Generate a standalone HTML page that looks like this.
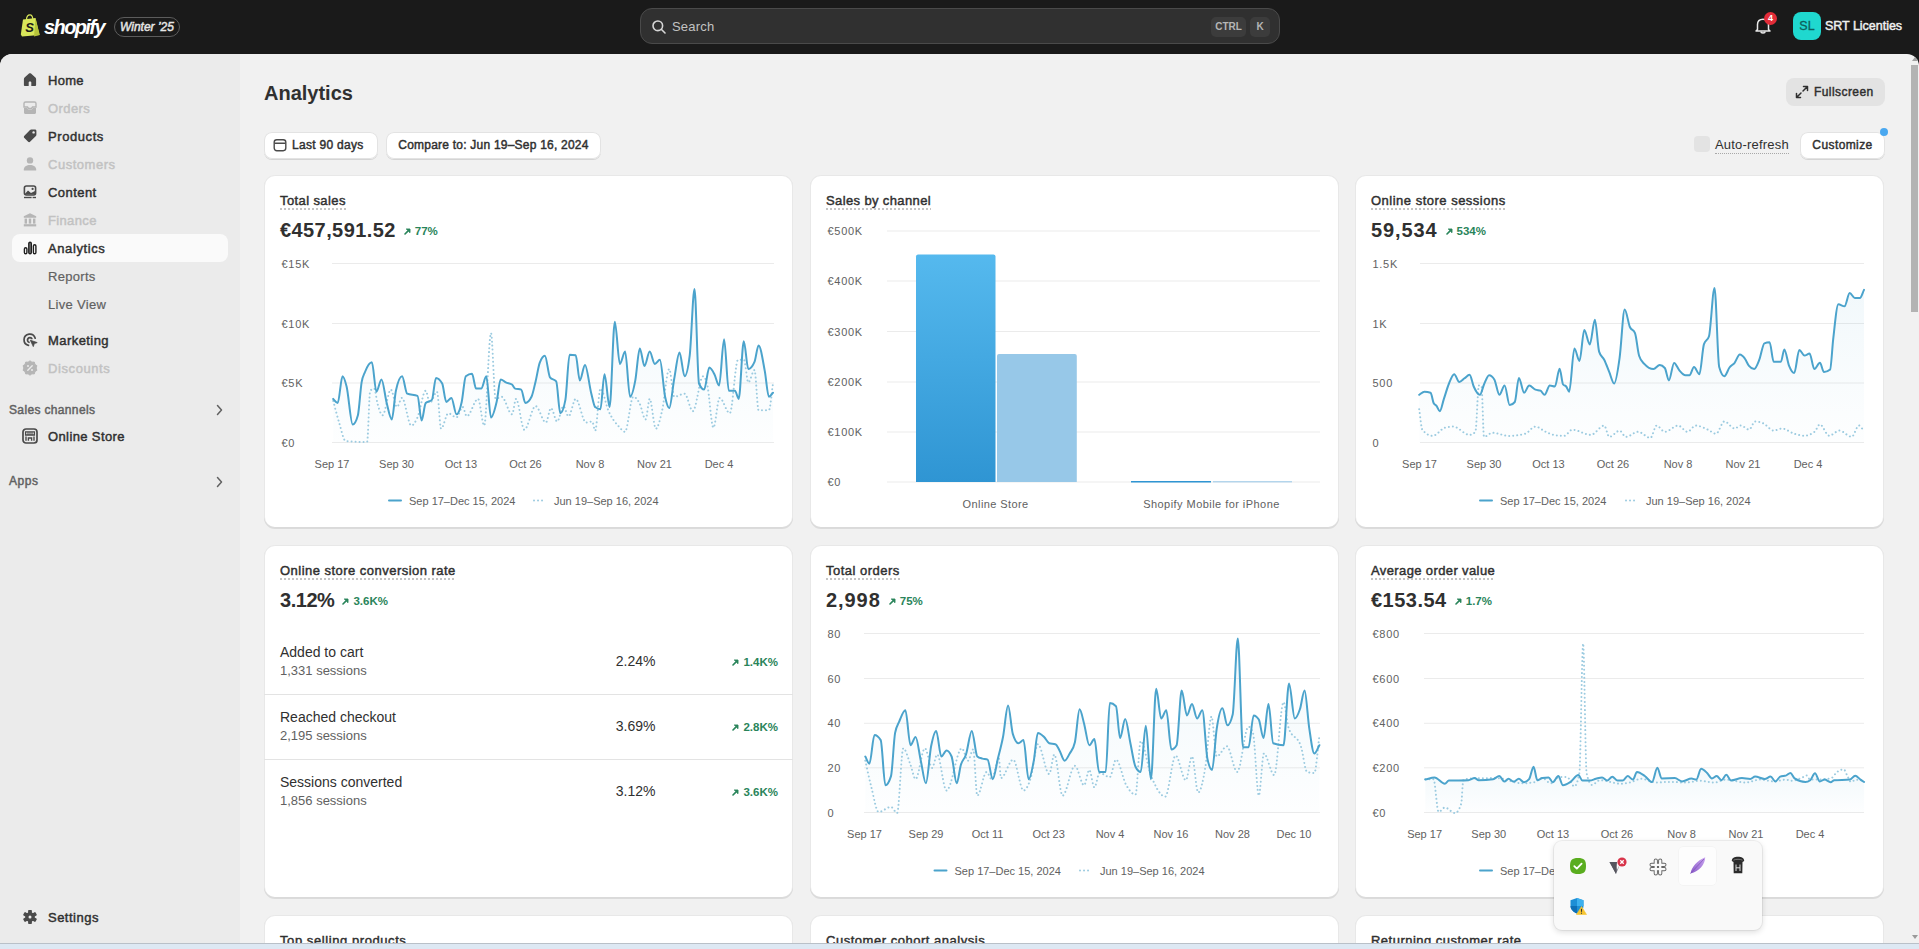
<!DOCTYPE html><html><head><meta charset="utf-8"><style>
*{box-sizing:border-box;margin:0;padding:0}
html,body{width:1919px;height:949px;overflow:hidden;background:#1a1a1a;font-family:"Liberation Sans",sans-serif;color:#303030}
.abs{position:absolute}
.sb{font-weight:400;-webkit-text-stroke:0.45px currentColor}
#top{position:absolute;left:0;top:0;width:1919px;height:54px;background:#1a1a1a}
#frame{position:absolute;left:0;top:54px;width:1919px;height:889px;background:#f1f1f1;border-radius:12px 12px 0 0;overflow:hidden}
#side{position:absolute;left:0;top:0;width:240px;height:889px;background:#ebebeb}
.nav{position:absolute;left:48px;font-size:13px;color:#303030;white-space:nowrap;line-height:16px}
.nav.dis{color:#c2c2c2}
.nav.sub{color:#616161;-webkit-text-stroke:0.2px currentColor;letter-spacing:0.2px}
.card{position:absolute;background:#fff;border-radius:11px;box-shadow:0 1px 0 0 rgba(26,26,26,.1),0 0 0 1px rgba(0,0,0,.09) inset,0 -1px 0 0 rgba(0,0,0,.06) inset;overflow:hidden}
.ctitle{position:absolute;left:16px;top:18px;font-size:13px;color:#303030;line-height:16px;white-space:nowrap}
.ctitle:after{content:"";position:absolute;left:0;right:0;bottom:-1px;height:2px;background:linear-gradient(to right,#c4c4c4 50%,transparent 50%) 0 0/4px 2px repeat-x}
.big{position:absolute;left:16px;top:45px;font-size:20px;font-weight:700;color:#303030;line-height:20px;white-space:nowrap}
.pct{font-size:11.5px;font-weight:700;color:#29845a;margin-left:7px;vertical-align:2px}
.btn{position:absolute;background:#fff;border-radius:8px;box-shadow:0 1px 0 0 #d4d4d4,0 0 0 1px #e3e3e3 inset;font-size:13px;color:#303030;white-space:nowrap;line-height:27px}
svg text{font-family:"Liberation Sans",sans-serif}
</style></head><body>
<div id="top">
<svg class="abs" style="left:20px;top:14px" width="21" height="23" viewBox="0 0 21 23">
<path d="M3 5.5 L15.5 4 L19.5 21 L2 22.5 L0.8 20.5 Z" fill="#d9e75a"/>
<path d="M15.5 4 L19.8 21 L14 22.5 Z" fill="#b6c43a"/>
<path d="M6.5 6 C6.5 2 8.5 0.8 10 0.8 C11.8 0.8 12.6 2.5 12.8 5" fill="none" stroke="#d9e75a" stroke-width="1.2"/>
<text x="9.5" y="18" font-size="13" font-weight="700" font-style="italic" fill="#1a1a1a" text-anchor="middle">S</text>
</svg>
<div class="abs" style="left:44px;top:16px;font-size:20px;font-weight:700;font-style:italic;color:#fff;letter-spacing:-1.6px;line-height:22px">shopify</div>
<div class="abs" style="left:114px;top:17px;width:66px;height:20px;border:1px solid #5c5c5c;border-radius:10px;font-size:12px;font-style:italic;color:#e6e6e6;text-align:center;line-height:18px" class="sb"><span class="sb">Winter ’25</span></div>
<div class="abs" style="left:640px;top:8px;width:640px;height:36px;background:#303030;border:1px solid #4a4a4a;border-radius:12px"></div>
<svg class="abs" style="left:652px;top:20px" width="14" height="14" viewBox="0 0 14 14"><circle cx="5.8" cy="5.8" r="4.8" fill="none" stroke="#d6d6d6" stroke-width="1.6"/><path d="M9.3 9.3 L13 13" stroke="#d6d6d6" stroke-width="1.6" stroke-linecap="round"/></svg>
<div class="abs" style="left:672px;top:19px;font-size:13px;color:#c2c2c2;line-height:16px;letter-spacing:0.2px">Search</div>
<div class="abs" style="left:1211px;top:17px;width:35px;height:20px;background:#3c3c3c;border-radius:5px;font-size:10px;font-weight:700;color:#b5b5b5;text-align:center;line-height:20px">CTRL</div>
<div class="abs" style="left:1250px;top:17px;width:20px;height:20px;background:#3c3c3c;border-radius:5px;font-size:10px;font-weight:700;color:#b5b5b5;text-align:center;line-height:20px">K</div>
<svg class="abs" style="left:1754px;top:16px" width="18" height="19" viewBox="0 0 18 19"><path d="M3.5 13.5 L3.5 8.5 C3.5 5.2 5.8 3.2 9 3.2 C12.2 3.2 14.5 5.2 14.5 8.5 L14.5 13.5 L16 15 L2 15 Z" fill="none" stroke="#e8e8e8" stroke-width="1.5" stroke-linejoin="round"/><path d="M7 15.5 C7 17.5 11 17.5 11 15.5" fill="none" stroke="#e8e8e8" stroke-width="1.5"/></svg>
<div class="abs" style="left:1764px;top:12px;width:13px;height:13px;border-radius:50%;background:#e22c38;font-size:9px;font-weight:700;color:#fff;text-align:center;line-height:13px">4</div>
<div class="abs" style="left:1793px;top:12px;width:28px;height:28px;background:#1fd8cf;border-radius:8px;font-size:12.5px;color:#0d5f5b;text-align:center;line-height:28px;-webkit-text-stroke:0.3px #0d5f5b">SL</div>
<div class="abs sb" style="left:1825px;top:18px;font-size:12.5px;color:#f0f0f0;line-height:16px;letter-spacing:-0.022px">SRT Licenties</div>
</div>
<div id="frame">
<div id="side">
<div class="abs" style="left:12px;top:180px;width:216px;height:28px;background:#fafafa;border-radius:8px"></div>
<div class="nav sb " style="top:18.5px;letter-spacing:0.259px">Home</div>
<div class="nav sb dis" style="top:46.5px;letter-spacing:0.418px">Orders</div>
<div class="nav sb " style="top:74.5px;letter-spacing:0.579px">Products</div>
<div class="nav sb dis" style="top:102.5px;letter-spacing:0.518px">Customers</div>
<div class="nav sb " style="top:130.5px;letter-spacing:0.45px">Content</div>
<div class="nav sb dis" style="top:158.5px;letter-spacing:0.351px">Finance</div>
<div class="nav sb " style="top:186.5px;letter-spacing:0.598px">Analytics</div>
<div class="nav sb sub" style="top:214.5px;letter-spacing:0.3px">Reports</div>
<div class="nav sb sub" style="top:242.5px;letter-spacing:0.3px">Live View</div>
<div class="nav sb " style="top:278.5px;letter-spacing:0.435px">Marketing</div>
<div class="nav sb dis" style="top:306.5px;letter-spacing:0.594px">Discounts</div>
<div class="nav sb " style="top:375.0px;letter-spacing:0.383px">Online Store</div>
<div class="nav sb " style="top:855.5px;letter-spacing:0.487px">Settings</div>
<div class="abs sb" style="left:9px;top:348.5px;font-size:12px;color:#616161;line-height:14px;letter-spacing:0.35px">Sales channels</div>
<div class="abs sb" style="left:9px;top:420px;font-size:12px;color:#616161;line-height:14px;letter-spacing:0.564px">Apps</div>
<svg class="abs" style="left:22px;top:18px" width="16" height="16" viewBox="0 0 16 16"><path d="M8 1.2 C8.4 1.2 8.7 1.3 9 1.6 L13.4 5.6 C13.9 6 14.1 6.5 14.1 7.1 L14.1 12.9 C14.1 13.6 13.6 14.1 12.9 14.1 L9.3 14.1 L9.3 10.6 C9.3 10 8.8 9.6 8.3 9.6 L7.7 9.6 C7.2 9.6 6.7 10 6.7 10.6 L6.7 14.1 L3.1 14.1 C2.4 14.1 1.9 13.6 1.9 12.9 L1.9 7.1 C1.9 6.5 2.1 6 2.6 5.6 L7 1.6 C7.3 1.3 7.6 1.2 8 1.2 Z" fill="#4a4a4a"/></svg>
<svg class="abs" style="left:22px;top:46px" width="16" height="16" viewBox="0 0 16 16"><path d="M3.5 2 L12.5 2 C13.4 2 14 2.6 14 3.5 L14 7 L10.5 7 L9.5 8.5 L6.5 8.5 L5.5 7 L2 7 L2 3.5 C2 2.6 2.6 2 3.5 2 Z" fill="none" stroke="#b5b5b5" stroke-width="1.4"/><path d="M2 8 L5 8 L6.2 9.6 L9.8 9.6 L11 8 L14 8 L14 12.5 C14 13.4 13.4 14 12.5 14 L3.5 14 C2.6 14 2 13.4 2 12.5 Z" fill="#b5b5b5"/></svg>
<svg class="abs" style="left:22px;top:74px" width="16" height="16" viewBox="0 0 16 16"><path d="M9.2 1.6 L13 1.6 C13.8 1.6 14.4 2.2 14.4 3 L14.4 6.8 C14.4 7.3 14.2 7.7 13.9 8 L8.3 13.6 C7.6 14.3 6.6 14.3 5.9 13.6 L2.4 10.1 C1.7 9.4 1.7 8.4 2.4 7.7 L8 2.1 C8.3 1.8 8.7 1.6 9.2 1.6 Z" fill="#4a4a4a"/><circle cx="11.6" cy="4.4" r="1.2" fill="#ebebeb"/></svg>
<svg class="abs" style="left:22px;top:102px" width="16" height="16" viewBox="0 0 16 16"><circle cx="8" cy="4.4" r="3.2" fill="#b5b5b5"/><path d="M1.8 13.5 C1.8 10.6 4.6 8.9 8 8.9 C11.4 8.9 14.2 10.6 14.2 13.5 L14.2 14.6 L1.8 14.6 Z" fill="#b5b5b5"/></svg>
<svg class="abs" style="left:22px;top:130px" width="16" height="16" viewBox="0 0 16 16"><rect x="2.4" y="2" width="11.2" height="9" rx="2" fill="none" stroke="#4a4a4a" stroke-width="1.6"/><path d="M3 9.8 L6 6.5 L9 9 L13 7 L13 10.5 L3 10.5 Z" fill="#4a4a4a"/><circle cx="10.6" cy="4.9" r="1.1" fill="#4a4a4a"/><rect x="2" y="12.8" width="7.6" height="1.4" fill="#4a4a4a"/><rect x="10.6" y="12.8" width="3.4" height="1.4" fill="#4a4a4a"/></svg>
<svg class="abs" style="left:22px;top:158px" width="16" height="16" viewBox="0 0 16 16"><path d="M8 1.2 L14.2 4.2 L14.2 5.8 L1.8 5.8 L1.8 4.2 Z" fill="#b5b5b5"/><rect x="2.6" y="6.6" width="2.4" height="5" fill="#b5b5b5"/><rect x="6.8" y="6.6" width="2.4" height="5" fill="#b5b5b5"/><rect x="11" y="6.6" width="2.4" height="5" fill="#b5b5b5"/><rect x="1.8" y="12.2" width="12.4" height="2.2" fill="#b5b5b5"/></svg>
<svg class="abs" style="left:22px;top:186px" width="16" height="16" viewBox="0 0 16 16"><rect x="2.4" y="7.7" width="2.5" height="6" rx="1.25" fill="#fff" stroke="#1f1f1f" stroke-width="1.4"/><rect x="6.8" y="2.2" width="2.5" height="11.5" rx="1.25" fill="#8a8a8a" stroke="#1f1f1f" stroke-width="1.4"/><rect x="11.4" y="4.7" width="2.5" height="9" rx="1.25" fill="#fff" stroke="#1f1f1f" stroke-width="1.4"/></svg>
<svg class="abs" style="left:22px;top:278px" width="16" height="16" viewBox="0 0 16 16"><path d="M13.2 6.2 A5.7 5.7 0 1 0 6.5 13.4" fill="none" stroke="#4a4a4a" stroke-width="1.7" stroke-linecap="round"/><path d="M9.8 6.6 A2.4 2.4 0 1 0 7 10.3" fill="none" stroke="#4a4a4a" stroke-width="1.7" stroke-linecap="round"/><path d="M8.3 8.2 L15.2 10.6 L12.3 11.6 L11.3 14.6 Z" fill="#4a4a4a" stroke="#4a4a4a" stroke-width="0.8" stroke-linejoin="round"/></svg>
<svg class="abs" style="left:22px;top:306px" width="16" height="16" viewBox="0 0 16 16"><path d="M8 0.8 L9.9 2.2 L12.3 2.1 L12.9 4.4 L14.9 5.7 L14.1 8 L14.9 10.3 L12.9 11.6 L12.3 13.9 L9.9 13.8 L8 15.2 L6.1 13.8 L3.7 13.9 L3.1 11.6 L1.1 10.3 L1.9 8 L1.1 5.7 L3.1 4.4 L3.7 2.1 L6.1 2.2 Z" fill="#b5b5b5" stroke="#b5b5b5" stroke-width="1" stroke-linejoin="round"/><path d="M5.8 10.2 L10.2 5.8" stroke="#ebebeb" stroke-width="1.4" stroke-linecap="round"/><circle cx="6" cy="6" r="1" fill="#ebebeb"/><circle cx="10" cy="10" r="1" fill="#ebebeb"/></svg>
<svg class="abs" style="left:22px;top:374px" width="16" height="16" viewBox="0 0 16 16"><rect x="1" y="1" width="14" height="14" rx="3" fill="none" stroke="#4a4a4a" stroke-width="1.7"/><path d="M3.6 3.8 L12.4 3.8 L12.4 7 L3.6 7 Z" fill="none" stroke="#4a4a4a" stroke-width="1.3"/><path d="M6 4 L6 7 M8 4 L8 7 M10 4 L10 7" stroke="#4a4a4a" stroke-width="1"/><path d="M4 12.8 L4 8.6 M12 12.8 L12 8.6 M6.4 12.8 L6.4 10 L9.6 10 L9.6 12.8" fill="none" stroke="#4a4a4a" stroke-width="1.4"/></svg>
<svg class="abs" style="left:22px;top:855px" width="16" height="16" viewBox="0 0 16 16"><g fill="#4a4a4a"><circle cx="8" cy="8" r="4.8"/><rect x="6.1" y="0.9" width="3.8" height="3.6" rx="0.8" transform="rotate(0 8 8)"/><rect x="6.1" y="0.9" width="3.8" height="3.6" rx="0.8" transform="rotate(60 8 8)"/><rect x="6.1" y="0.9" width="3.8" height="3.6" rx="0.8" transform="rotate(120 8 8)"/><rect x="6.1" y="0.9" width="3.8" height="3.6" rx="0.8" transform="rotate(180 8 8)"/><rect x="6.1" y="0.9" width="3.8" height="3.6" rx="0.8" transform="rotate(240 8 8)"/><rect x="6.1" y="0.9" width="3.8" height="3.6" rx="0.8" transform="rotate(300 8 8)"/></g><circle cx="8" cy="8" r="1.5" fill="#ebebeb"/></svg>
<svg class="abs" style="left:212px;top:348px" width="16" height="16" viewBox="0 0 16 16"><path d="M5.5 3.5 L9.5 8 L5.5 12.5" fill="none" stroke="#616161" stroke-width="1.5" stroke-linecap="round" stroke-linejoin="round"/></svg>
<svg class="abs" style="left:212px;top:420px" width="16" height="16" viewBox="0 0 16 16"><path d="M5.5 3.5 L9.5 8 L5.5 12.5" fill="none" stroke="#616161" stroke-width="1.5" stroke-linecap="round" stroke-linejoin="round"/></svg>
</div>
<div class="abs" style="left:264px;top:27px;font-size:20px;font-weight:700;color:#303030;line-height:24px">Analytics</div>
<div class="abs" style="left:1786px;top:24px;width:99px;height:28px;background:#e3e3e3;border-radius:8px"></div>
<svg class="abs" style="left:1795px;top:31px" width="14" height="14" viewBox="0 0 14 14"><path d="M8.5 1.5 L12.5 1.5 L12.5 5.5 M12.5 1.5 L8 6 M5.5 12.5 L1.5 12.5 L1.5 8.5 M1.5 12.5 L6 8" fill="none" stroke="#303030" stroke-width="1.5" stroke-linecap="round" stroke-linejoin="round"/></svg>
<div class="abs sb" style="left:1814px;top:31px;font-size:12px;color:#303030;line-height:14px;letter-spacing:0.424px">Fullscreen</div>
<div class="btn sb" style="left:264px;top:78px;width:114px;height:27px;padding-left:28px;font-size:12px;letter-spacing:0.3px">Last 90 days</div>
<svg class="abs" style="left:273px;top:84px" width="14" height="14" viewBox="0 0 14 14"><rect x="1.2" y="1.7" width="11.6" height="11" rx="2.6" fill="none" stroke="#4a4a4a" stroke-width="1.4"/><path d="M1.5 5.3 L12.5 5.3" stroke="#4a4a4a" stroke-width="1.4"/></svg>
<div class="btn sb" style="left:386px;top:78px;width:215px;height:27px;text-align:center;font-size:12px;letter-spacing:0.222px">Compare to: Jun 19–Sep 16, 2024</div>
<div class="abs" style="left:1694px;top:82px;width:16px;height:16px;background:#e3e3e3;border-radius:4px"></div>
<div class="abs" style="left:1715px;top:84px;font-size:13px;color:#303030;line-height:14px;border-bottom:1.5px dotted #a8a8a8;padding-bottom:1px;letter-spacing:0.2px">Auto-refresh</div>
<div class="btn sb" style="left:1800px;top:78px;width:85px;height:27px;text-align:center;font-size:12px;letter-spacing:0.398px">Customize</div>
<div class="abs" style="left:1880px;top:74px;width:8px;height:8px;border-radius:50%;background:#4aa8f0"></div>
<div class="card" style="left:264px;top:121px;width:529px;height:353px">
<div class="ctitle sb" style="letter-spacing:0.4px">Total sales</div>
<div class="big"><span style="letter-spacing:0.41px">€457,591.52</span><span class="pct"><svg width="7" height="7" viewBox="0 0 7 7" style="margin-right:4px;margin-left:1px;vertical-align:0px"><path d="M1 6 L3.6 3.4" stroke="#29845a" stroke-width="1.6" stroke-linecap="round"/><path d="M2.3 1 L6 1 L6 4.7 Z" fill="#29845a" stroke="#29845a" stroke-width="0.9" stroke-linejoin="round"/></svg>77%</span></div>
<svg class="abs" style="left:0;top:0" width="529" height="353" viewBox="264 175 529 353">
<defs><linearGradient id="g264175" x1="0" y1="0" x2="0" y2="1"><stop offset="0" stop-color="#4ba3cc" stop-opacity="0.075"/><stop offset="1" stop-color="#4ba3cc" stop-opacity="0.01"/></linearGradient></defs>
<line x1="332" y1="263.5" x2="774" y2="263.5" stroke="#ebebeb" stroke-width="1"/>
<text x="281.5" y="267.5" font-size="11" fill="#616161" letter-spacing="0.7">€15K</text>
<line x1="332" y1="323.5" x2="774" y2="323.5" stroke="#ebebeb" stroke-width="1"/>
<text x="281.5" y="327.5" font-size="11" fill="#616161" letter-spacing="0.7">€10K</text>
<line x1="332" y1="383" x2="774" y2="383" stroke="#ebebeb" stroke-width="1"/>
<text x="281.5" y="387" font-size="11" fill="#616161" letter-spacing="0.7">€5K</text>
<line x1="332" y1="442.5" x2="774" y2="442.5" stroke="#ebebeb" stroke-width="1"/>
<text x="281.5" y="446.5" font-size="11" fill="#616161" letter-spacing="0.7">€0</text>
<text x="332" y="468" font-size="11" fill="#616161" text-anchor="middle">Sep 17</text>
<text x="396.5" y="468" font-size="11" fill="#616161" text-anchor="middle">Sep 30</text>
<text x="461" y="468" font-size="11" fill="#616161" text-anchor="middle">Oct 13</text>
<text x="525.5" y="468" font-size="11" fill="#616161" text-anchor="middle">Oct 26</text>
<text x="590" y="468" font-size="11" fill="#616161" text-anchor="middle">Nov 8</text>
<text x="654.5" y="468" font-size="11" fill="#616161" text-anchor="middle">Nov 21</text>
<text x="719" y="468" font-size="11" fill="#616161" text-anchor="middle">Dec 4</text>
<path d="M333.2,398.9 C334.7,400.3 336.2,403.0 337.7,403.0 C339.3,403.0 340.9,376.3 342.5,376.3 C343.9,376.3 345.2,381.0 346.6,386.5 C348.6,394.6 350.7,424.6 352.7,424.6 C354.4,424.6 356.2,421.5 357.9,415.3 C359.1,410.9 360.4,389.6 361.6,382.4 C362.7,375.8 363.9,374.8 365.0,372.0 C367.3,366.2 369.6,362.3 371.9,362.3 C373.4,362.3 374.9,391.7 376.4,391.7 C378.1,391.7 379.8,379.4 381.5,379.4 C383.2,379.4 385.0,396.3 386.7,403.0 C388.4,409.6 390.1,419.4 391.8,419.4 C393.2,419.4 394.5,397.0 395.9,390.7 C398.0,381.1 400.0,376.3 402.1,376.3 C403.8,376.3 405.5,393.0 407.2,393.7 C410.6,395.1 414.1,394.4 417.5,395.8 C418.9,396.4 420.2,420.5 421.6,420.5 C423.0,420.5 424.3,404.4 425.7,403.0 C427.8,400.9 429.8,402.0 431.9,399.9 C433.3,398.5 434.6,377.9 436.0,377.9 C438.1,377.9 440.1,379.8 442.2,383.5 C443.6,386.0 444.9,402.0 446.3,402.0 C448.0,402.0 449.7,397.9 451.4,397.9 C453.1,397.9 454.8,414.3 456.5,414.3 C458.2,414.3 460.0,409.9 461.7,402.0 C463.1,395.8 464.4,377.4 465.8,376.3 C467.9,374.6 469.9,373.8 472.0,373.8 C473.4,373.8 474.7,388.6 476.1,388.6 C477.8,388.6 479.5,388.6 481.2,388.6 C482.9,388.6 484.6,376.3 486.3,376.3 C487.9,376.3 489.4,417.4 491.0,417.4 C492.9,417.4 494.7,410.1 496.6,402.0 C498.0,396.1 499.3,379.4 500.7,379.4 C502.4,379.4 504.1,381.6 505.8,382.4 C507.9,383.4 509.9,383.1 512.0,384.5 C513.0,385.2 514.1,388.3 515.1,388.6 C517.1,389.3 519.2,388.9 521.2,389.6 C522.6,390.1 524.0,403.0 525.4,403.0 C527.4,403.0 529.5,400.9 531.5,396.8 C532.9,394.0 534.2,387.0 535.6,381.4 C537.0,375.8 538.3,366.7 539.7,362.9 C541.4,358.1 543.2,355.7 544.9,355.7 C546.6,355.7 548.3,375.1 550.0,377.3 C552.1,380.0 554.1,378.7 556.2,381.4 C557.6,383.2 558.9,413.3 560.3,413.3 C562.0,413.3 563.7,408.8 565.4,399.9 C566.8,392.5 568.2,354.7 569.6,354.7 C571.6,354.7 573.7,354.9 575.7,355.3 C577.1,355.6 578.4,380.4 579.8,380.4 C581.5,380.4 583.3,365.0 585.0,365.0 C587.0,365.0 589.1,384.7 591.1,392.7 C592.5,398.1 593.8,406.0 595.2,407.1 C596.9,408.5 598.7,409.2 600.4,409.2 C601.8,409.2 603.1,374.2 604.5,374.2 C606.2,374.2 607.9,407.1 609.6,407.1 C611.3,407.1 613.1,321.8 614.8,321.8 C616.5,321.8 618.2,363.9 619.9,363.9 C621.6,363.9 623.4,351.6 625.1,351.6 C626.8,351.6 628.4,396.8 630.1,396.8 C631.8,396.8 633.6,389.5 635.3,380.4 C636.8,372.5 638.3,348.5 639.8,348.5 C641.4,348.5 642.9,366.0 644.5,366.0 C646.2,366.0 648.0,351.6 649.7,351.6 C651.4,351.6 653.1,364.0 654.8,364.0 C656.5,364.0 658.2,359.8 659.9,359.8 C661.6,359.8 663.4,388.7 665.1,396.8 C666.5,403.2 667.8,408.1 669.2,408.1 C670.9,408.1 672.6,387.5 674.3,378.3 C676.0,368.9 677.8,352.6 679.5,352.6 C681.2,352.6 682.9,376.3 684.6,376.3 C686.3,376.3 688.0,369.4 689.7,355.7 C691.3,342.8 692.9,288.9 694.5,288.9 C696.0,288.9 697.5,379.9 699.0,383.5 C700.7,387.6 702.4,389.6 704.1,389.6 C705.8,389.6 707.6,367.6 709.3,367.6 C711.0,367.6 712.7,371.0 714.4,374.2 C716.0,377.1 717.5,385.5 719.1,385.5 C720.8,385.5 722.4,339.3 724.1,339.3 C725.7,339.3 727.2,390.7 728.8,390.7 C730.9,390.7 732.9,390.7 735.0,390.7 C736.2,390.7 737.5,398.9 738.7,398.9 C740.4,398.9 742.1,341.3 743.8,341.3 C745.3,341.3 746.8,369.1 748.3,369.1 C750.4,369.1 752.4,366.7 754.5,361.9 C755.9,358.7 757.2,345.4 758.6,345.4 C760.7,345.4 762.7,359.9 764.8,371.1 C766.2,378.5 767.5,396.8 768.9,396.8 C770.3,396.8 771.6,394.1 773.0,392.7 L773.0,442.5 L333.2,442.5 Z" fill="url(#g264175)"/>
<path d="M333.2,401.0 C335.3,408.5 337.3,416.8 339.4,423.5 C341.5,430.2 343.5,440.8 345.6,441.0 C352.8,441.7 359.9,442.0 367.1,442.0 C368.1,442.0 369.2,391.8 370.2,390.7 C371.6,389.3 372.9,388.6 374.3,388.6 C375.3,388.6 376.4,399.1 377.4,403.0 C379.1,409.6 380.9,415.3 382.6,415.3 C385.3,415.3 388.1,389.6 390.8,389.6 C392.9,389.6 394.9,407.0 397.0,407.0 C398.7,407.0 400.3,397.9 402.0,397.9 C405.1,397.9 408.2,425.6 411.3,425.6 C413.4,425.6 415.4,421.9 417.5,417.4 C420.2,411.5 423.0,390.7 425.7,390.7 C427.1,390.7 428.4,403.0 429.8,403.0 C432.2,403.0 434.6,391.7 437.0,391.7 C438.4,391.7 439.7,428.7 441.1,428.7 C443.5,428.7 445.9,413.3 448.3,413.3 C451.0,413.3 453.8,417.4 456.5,417.4 C458.6,417.4 460.6,407.0 462.7,407.0 C464.1,407.0 465.4,416.3 466.8,416.3 C470.6,416.3 474.3,398.9 478.1,398.9 C480.1,398.9 482.2,425.6 484.2,425.6 C486.5,425.6 488.7,333.1 491.0,333.1 C492.5,333.1 494.1,398.9 495.6,398.9 C497.6,398.9 499.7,396.8 501.7,396.8 C505.1,396.8 508.6,414.3 512.0,414.3 C513.4,414.3 514.7,398.9 516.1,398.9 C518.8,398.9 521.6,429.7 524.3,429.7 C528.1,429.7 531.8,406.1 535.6,406.1 C539.0,406.1 542.5,422.5 545.9,422.5 C547.6,422.5 549.3,408.1 551.0,408.1 C553.1,408.1 555.1,421.5 557.2,421.5 C559.3,421.5 561.3,406.1 563.4,406.1 C565.1,406.1 566.8,416.4 568.5,416.4 C570.9,416.4 573.3,398.9 575.7,398.9 C579.1,398.9 582.6,422.5 586.0,422.5 C588.1,422.5 590.1,421.5 592.2,421.5 C593.2,421.5 594.2,430.7 595.2,430.7 C596.9,430.7 598.7,388.6 600.4,388.6 C603.1,388.6 605.9,405.2 608.6,411.2 C612.0,418.7 615.5,422.9 618.9,426.6 C620.9,428.8 623.0,431.8 625.0,431.8 C627.7,431.8 630.5,396.8 633.2,396.8 C635.3,396.8 637.3,399.2 639.4,403.0 C641.5,406.8 643.5,419.4 645.6,419.4 C647.0,419.4 648.3,398.9 649.7,398.9 C651.7,398.9 653.8,428.7 655.8,428.7 C657.9,428.7 659.9,419.9 662.0,411.2 C664.4,401.1 666.8,369.1 669.2,369.1 C670.9,369.1 672.6,396.8 674.3,396.8 C677.7,396.8 681.2,393.7 684.6,393.7 C687.3,393.7 690.1,411.2 692.8,411.2 C696.2,411.2 699.7,376.3 703.1,376.3 C704.5,376.3 705.8,379.1 707.2,384.5 C709.3,392.7 711.3,427.7 713.4,427.7 C715.5,427.7 717.5,397.9 719.6,397.9 C723.0,397.9 726.4,413.3 729.8,413.3 C732.5,413.3 735.3,359.8 738.0,359.8 C740.0,359.8 742.0,359.8 744.0,359.8 C745.4,359.8 746.9,382.4 748.3,382.4 C750.4,382.4 752.4,370.1 754.5,370.1 C755.9,370.1 757.2,410.2 758.6,410.2 C762.0,410.2 765.5,410.2 768.9,410.2 C770.3,410.2 771.6,392.4 773.0,383.5" fill="none" stroke="#9ccbe0" stroke-width="2" stroke-dasharray="0.01 4" stroke-linecap="round"/>
<path d="M333.2,398.9 C334.7,400.3 336.2,403.0 337.7,403.0 C339.3,403.0 340.9,376.3 342.5,376.3 C343.9,376.3 345.2,381.0 346.6,386.5 C348.6,394.6 350.7,424.6 352.7,424.6 C354.4,424.6 356.2,421.5 357.9,415.3 C359.1,410.9 360.4,389.6 361.6,382.4 C362.7,375.8 363.9,374.8 365.0,372.0 C367.3,366.2 369.6,362.3 371.9,362.3 C373.4,362.3 374.9,391.7 376.4,391.7 C378.1,391.7 379.8,379.4 381.5,379.4 C383.2,379.4 385.0,396.3 386.7,403.0 C388.4,409.6 390.1,419.4 391.8,419.4 C393.2,419.4 394.5,397.0 395.9,390.7 C398.0,381.1 400.0,376.3 402.1,376.3 C403.8,376.3 405.5,393.0 407.2,393.7 C410.6,395.1 414.1,394.4 417.5,395.8 C418.9,396.4 420.2,420.5 421.6,420.5 C423.0,420.5 424.3,404.4 425.7,403.0 C427.8,400.9 429.8,402.0 431.9,399.9 C433.3,398.5 434.6,377.9 436.0,377.9 C438.1,377.9 440.1,379.8 442.2,383.5 C443.6,386.0 444.9,402.0 446.3,402.0 C448.0,402.0 449.7,397.9 451.4,397.9 C453.1,397.9 454.8,414.3 456.5,414.3 C458.2,414.3 460.0,409.9 461.7,402.0 C463.1,395.8 464.4,377.4 465.8,376.3 C467.9,374.6 469.9,373.8 472.0,373.8 C473.4,373.8 474.7,388.6 476.1,388.6 C477.8,388.6 479.5,388.6 481.2,388.6 C482.9,388.6 484.6,376.3 486.3,376.3 C487.9,376.3 489.4,417.4 491.0,417.4 C492.9,417.4 494.7,410.1 496.6,402.0 C498.0,396.1 499.3,379.4 500.7,379.4 C502.4,379.4 504.1,381.6 505.8,382.4 C507.9,383.4 509.9,383.1 512.0,384.5 C513.0,385.2 514.1,388.3 515.1,388.6 C517.1,389.3 519.2,388.9 521.2,389.6 C522.6,390.1 524.0,403.0 525.4,403.0 C527.4,403.0 529.5,400.9 531.5,396.8 C532.9,394.0 534.2,387.0 535.6,381.4 C537.0,375.8 538.3,366.7 539.7,362.9 C541.4,358.1 543.2,355.7 544.9,355.7 C546.6,355.7 548.3,375.1 550.0,377.3 C552.1,380.0 554.1,378.7 556.2,381.4 C557.6,383.2 558.9,413.3 560.3,413.3 C562.0,413.3 563.7,408.8 565.4,399.9 C566.8,392.5 568.2,354.7 569.6,354.7 C571.6,354.7 573.7,354.9 575.7,355.3 C577.1,355.6 578.4,380.4 579.8,380.4 C581.5,380.4 583.3,365.0 585.0,365.0 C587.0,365.0 589.1,384.7 591.1,392.7 C592.5,398.1 593.8,406.0 595.2,407.1 C596.9,408.5 598.7,409.2 600.4,409.2 C601.8,409.2 603.1,374.2 604.5,374.2 C606.2,374.2 607.9,407.1 609.6,407.1 C611.3,407.1 613.1,321.8 614.8,321.8 C616.5,321.8 618.2,363.9 619.9,363.9 C621.6,363.9 623.4,351.6 625.1,351.6 C626.8,351.6 628.4,396.8 630.1,396.8 C631.8,396.8 633.6,389.5 635.3,380.4 C636.8,372.5 638.3,348.5 639.8,348.5 C641.4,348.5 642.9,366.0 644.5,366.0 C646.2,366.0 648.0,351.6 649.7,351.6 C651.4,351.6 653.1,364.0 654.8,364.0 C656.5,364.0 658.2,359.8 659.9,359.8 C661.6,359.8 663.4,388.7 665.1,396.8 C666.5,403.2 667.8,408.1 669.2,408.1 C670.9,408.1 672.6,387.5 674.3,378.3 C676.0,368.9 677.8,352.6 679.5,352.6 C681.2,352.6 682.9,376.3 684.6,376.3 C686.3,376.3 688.0,369.4 689.7,355.7 C691.3,342.8 692.9,288.9 694.5,288.9 C696.0,288.9 697.5,379.9 699.0,383.5 C700.7,387.6 702.4,389.6 704.1,389.6 C705.8,389.6 707.6,367.6 709.3,367.6 C711.0,367.6 712.7,371.0 714.4,374.2 C716.0,377.1 717.5,385.5 719.1,385.5 C720.8,385.5 722.4,339.3 724.1,339.3 C725.7,339.3 727.2,390.7 728.8,390.7 C730.9,390.7 732.9,390.7 735.0,390.7 C736.2,390.7 737.5,398.9 738.7,398.9 C740.4,398.9 742.1,341.3 743.8,341.3 C745.3,341.3 746.8,369.1 748.3,369.1 C750.4,369.1 752.4,366.7 754.5,361.9 C755.9,358.7 757.2,345.4 758.6,345.4 C760.7,345.4 762.7,359.9 764.8,371.1 C766.2,378.5 767.5,396.8 768.9,396.8 C770.3,396.8 771.6,394.1 773.0,392.7" fill="none" stroke="#4ba3cc" stroke-width="2" stroke-linejoin="round" stroke-linecap="round"/>
<line x1="389" y1="500.5" x2="401" y2="500.5" stroke="#4ba3cc" stroke-width="2" stroke-linecap="round"/>
<text x="409" y="504.5" font-size="11" fill="#616161">Sep 17–Dec 15, 2024</text>
<line x1="534" y1="500.5" x2="546" y2="500.5" stroke="#9ccbe0" stroke-width="2" stroke-dasharray="0.01 4" stroke-linecap="round"/>
<text x="554" y="504.5" font-size="11" fill="#616161">Jun 19–Sep 16, 2024</text>
</svg>
</div>
<div class="card" style="left:810px;top:121px;width:529px;height:353px">
<div class="ctitle sb" style="letter-spacing:0.378px">Sales by channel</div>
<svg class="abs" style="left:0;top:0" width="529" height="353" viewBox="810 175 529 353">
<defs><linearGradient id="bar1" x1="0" y1="0" x2="0" y2="1"><stop offset="0" stop-color="#55b9ee"/><stop offset="1" stop-color="#2f95d3"/></linearGradient></defs>
<line x1="887" y1="231" x2="1320" y2="231" stroke="#ebebeb" stroke-width="1"/>
<text x="827.5" y="235" font-size="11" fill="#616161" letter-spacing="0.7">€500K</text>
<line x1="887" y1="281" x2="1320" y2="281" stroke="#ebebeb" stroke-width="1"/>
<text x="827.5" y="285" font-size="11" fill="#616161" letter-spacing="0.7">€400K</text>
<line x1="887" y1="331.5" x2="1320" y2="331.5" stroke="#ebebeb" stroke-width="1"/>
<text x="827.5" y="335.5" font-size="11" fill="#616161" letter-spacing="0.7">€300K</text>
<line x1="887" y1="382" x2="1320" y2="382" stroke="#ebebeb" stroke-width="1"/>
<text x="827.5" y="386" font-size="11" fill="#616161" letter-spacing="0.7">€200K</text>
<line x1="887" y1="432" x2="1320" y2="432" stroke="#ebebeb" stroke-width="1"/>
<text x="827.5" y="436" font-size="11" fill="#616161" letter-spacing="0.7">€100K</text>
<line x1="887" y1="482" x2="1320" y2="482" stroke="#ebebeb" stroke-width="1"/>
<text x="827.5" y="486" font-size="11" fill="#616161" letter-spacing="0.7">€0</text>
<path d="M916,482 L916,256.5 Q916,254.5 918,254.5 L993.5,254.5 Q995.5,254.5 995.5,256.5 L995.5,482 Z" fill="url(#bar1)"/>
<path d="M997,482 L997,356 Q997,354 999,354 L1074.8,354 Q1076.8,354 1076.8,356 L1076.8,482 Z" fill="#97c8e8"/>
<rect x="1131" y="481" width="80" height="1.5" fill="#2f95d3"/>
<rect x="1213" y="481.3" width="79" height="1" fill="#97c8e8"/>
<text x="995.6" y="507.5" font-size="11" fill="#616161" text-anchor="middle" letter-spacing="0.4">Online Store</text>
<text x="1211.5" y="507.5" font-size="11" fill="#616161" text-anchor="middle" letter-spacing="0.45">Shopify Mobile for iPhone</text>
</svg>
</div>
<div class="card" style="left:1355px;top:121px;width:529px;height:353px">
<div class="ctitle sb" style="letter-spacing:0.495px">Online store sessions</div>
<div class="big"><span style="letter-spacing:0.9px">59,534</span><span class="pct"><svg width="7" height="7" viewBox="0 0 7 7" style="margin-right:4px;margin-left:1px;vertical-align:0px"><path d="M1 6 L3.6 3.4" stroke="#29845a" stroke-width="1.6" stroke-linecap="round"/><path d="M2.3 1 L6 1 L6 4.7 Z" fill="#29845a" stroke="#29845a" stroke-width="0.9" stroke-linejoin="round"/></svg>534%</span></div>
<svg class="abs" style="left:0;top:0" width="529" height="353" viewBox="1355 175 529 353">
<defs><linearGradient id="g1355175" x1="0" y1="0" x2="0" y2="1"><stop offset="0" stop-color="#4ba3cc" stop-opacity="0.075"/><stop offset="1" stop-color="#4ba3cc" stop-opacity="0.01"/></linearGradient></defs>
<line x1="1420" y1="263.5" x2="1864" y2="263.5" stroke="#ebebeb" stroke-width="1"/>
<text x="1372.5" y="267.5" font-size="11" fill="#616161" letter-spacing="0.7">1.5K</text>
<line x1="1420" y1="323.5" x2="1864" y2="323.5" stroke="#ebebeb" stroke-width="1"/>
<text x="1372.5" y="327.5" font-size="11" fill="#616161" letter-spacing="0.7">1K</text>
<line x1="1420" y1="383" x2="1864" y2="383" stroke="#ebebeb" stroke-width="1"/>
<text x="1372.5" y="387" font-size="11" fill="#616161" letter-spacing="0.7">500</text>
<line x1="1420" y1="442.5" x2="1864" y2="442.5" stroke="#ebebeb" stroke-width="1"/>
<text x="1372.5" y="446.5" font-size="11" fill="#616161" letter-spacing="0.7">0</text>
<text x="1419.5" y="468" font-size="11" fill="#616161" text-anchor="middle">Sep 17</text>
<text x="1484" y="468" font-size="11" fill="#616161" text-anchor="middle">Sep 30</text>
<text x="1548.5" y="468" font-size="11" fill="#616161" text-anchor="middle">Oct 13</text>
<text x="1613" y="468" font-size="11" fill="#616161" text-anchor="middle">Oct 26</text>
<text x="1678" y="468" font-size="11" fill="#616161" text-anchor="middle">Nov 8</text>
<text x="1743" y="468" font-size="11" fill="#616161" text-anchor="middle">Nov 21</text>
<text x="1808" y="468" font-size="11" fill="#616161" text-anchor="middle">Dec 4</text>
<path d="M1419.2,394.8 C1420.9,393.8 1422.7,391.7 1424.4,391.7 C1426.5,391.7 1428.5,392.0 1430.6,392.7 C1431.6,393.0 1432.6,401.0 1433.6,403.0 C1434.6,405.1 1435.7,404.7 1436.7,406.1 C1437.7,407.5 1438.8,411.2 1439.8,411.2 C1441.2,411.2 1442.5,403.0 1443.9,398.9 C1445.6,393.8 1447.3,387.6 1449.0,383.5 C1450.7,379.3 1452.5,374.2 1454.2,374.2 C1455.9,374.2 1457.6,382.0 1459.3,382.0 C1461.0,382.0 1462.8,379.5 1464.5,378.3 C1466.2,377.1 1467.9,374.8 1469.6,374.8 C1471.0,374.8 1472.3,383.4 1473.7,386.5 C1475.8,391.2 1477.8,394.8 1479.9,394.8 C1481.3,394.8 1482.6,387.5 1484.0,384.5 C1485.7,380.8 1487.4,375.2 1489.1,375.2 C1490.8,375.2 1492.6,376.6 1494.3,379.4 C1496.0,382.1 1497.7,394.8 1499.4,394.8 C1501.1,394.8 1502.9,385.5 1504.6,385.5 C1506.3,385.5 1508.0,405.1 1509.7,405.1 C1511.4,405.1 1513.1,404.1 1514.8,402.0 C1516.2,400.3 1517.5,377.9 1518.9,377.9 C1520.6,377.9 1522.4,392.7 1524.1,392.7 C1525.8,392.7 1527.5,385.5 1529.2,385.5 C1531.3,385.5 1533.3,388.7 1535.4,389.6 C1537.1,390.3 1538.8,390.0 1540.5,390.7 C1541.9,391.3 1543.2,394.8 1544.6,394.8 C1546.3,394.8 1548.1,385.5 1549.8,385.5 C1551.5,385.5 1553.2,386.5 1554.9,386.5 C1556.5,386.5 1558.0,368.7 1559.6,368.7 C1560.8,368.7 1561.9,383.0 1563.1,384.5 C1564.1,385.8 1565.2,385.3 1566.2,386.5 C1567.2,387.7 1568.2,391.7 1569.2,391.7 C1570.9,391.7 1572.7,348.5 1574.4,348.5 C1576.1,348.5 1577.8,360.9 1579.5,360.9 C1581.1,360.9 1582.7,330.0 1584.3,330.0 C1586.1,330.0 1588.0,344.4 1589.8,344.4 C1591.5,344.4 1593.2,319.7 1594.9,319.7 C1596.3,319.7 1597.7,347.1 1599.1,351.6 C1600.8,357.1 1602.5,356.4 1604.2,359.8 C1605.9,363.2 1607.6,368.1 1609.3,372.2 C1610.9,376.0 1612.5,383.5 1614.1,383.5 C1615.9,383.5 1617.8,370.9 1619.6,357.8 C1621.3,345.6 1623.0,309.5 1624.7,309.5 C1626.4,309.5 1628.2,323.1 1629.9,327.0 C1631.6,330.9 1633.3,329.0 1635.0,333.1 C1636.4,336.4 1637.7,351.4 1639.1,355.7 C1640.8,361.2 1642.6,361.9 1644.3,363.9 C1647.4,367.4 1650.4,369.1 1653.5,369.1 C1655.6,369.1 1657.6,365.0 1659.7,365.0 C1661.4,365.0 1663.1,366.0 1664.8,368.0 C1666.2,369.6 1667.5,380.4 1668.9,380.4 C1670.6,380.4 1672.4,362.9 1674.1,362.9 C1675.8,362.9 1677.5,368.2 1679.2,370.1 C1681.3,372.5 1683.3,375.2 1685.4,375.2 C1686.8,375.2 1688.1,375.2 1689.5,375.2 C1691.0,375.2 1692.5,367.0 1694.0,367.0 C1695.8,367.0 1697.6,374.2 1699.4,374.2 C1700.9,374.2 1702.4,349.2 1703.9,344.4 C1705.6,338.9 1707.3,341.7 1709.0,336.2 C1710.8,330.3 1712.7,287.9 1714.5,287.9 C1716.1,287.9 1717.6,361.5 1719.2,367.0 C1720.9,373.1 1722.7,376.2 1724.4,376.2 C1726.1,376.2 1727.8,369.7 1729.5,367.5 C1731.2,365.3 1732.9,364.9 1734.6,362.8 C1736.3,360.6 1738.1,354.6 1739.8,354.6 C1741.5,354.6 1743.2,356.4 1744.9,358.7 C1746.3,360.5 1747.6,364.3 1749.0,365.9 C1750.7,368.0 1752.5,369.0 1754.2,369.0 C1755.9,369.0 1757.6,364.0 1759.3,359.7 C1761.0,355.4 1762.7,344.0 1764.4,343.3 C1766.1,342.6 1767.9,342.3 1769.6,342.3 C1771.0,342.3 1772.3,361.8 1773.7,361.8 C1776.1,361.8 1778.5,361.8 1780.9,361.8 C1782.0,361.8 1783.2,349.5 1784.3,349.5 C1785.9,349.5 1787.5,362.0 1789.1,365.9 C1790.8,370.1 1792.5,373.1 1794.2,373.1 C1795.9,373.1 1797.6,349.9 1799.3,349.9 C1801.0,349.9 1802.8,355.6 1804.5,355.6 C1806.2,355.6 1807.9,353.6 1809.6,353.6 C1811.2,353.6 1812.7,369.0 1814.3,369.0 C1816.2,369.0 1818.0,362.8 1819.9,362.8 C1821.3,362.8 1822.6,372.1 1824.0,372.1 C1826.0,372.1 1828.1,371.3 1830.1,369.6 C1831.1,368.8 1832.2,348.1 1833.2,339.2 C1834.9,324.2 1836.7,304.3 1838.4,304.3 C1840.4,304.3 1842.5,306.3 1844.5,306.3 C1846.2,306.3 1848.0,293.0 1849.7,293.0 C1851.4,293.0 1853.1,298.1 1854.8,298.1 C1856.5,298.1 1858.2,298.1 1859.9,298.1 C1861.3,298.1 1862.6,292.6 1864.0,289.9 L1864.0,442.5 L1419.2,442.5 Z" fill="url(#g1355175)"/>
<path d="M1419.2,409.2 C1420.2,416.0 1421.3,428.5 1422.3,429.7 C1425.7,433.8 1429.2,435.9 1432.6,435.9 C1436.7,435.9 1440.8,428.8 1444.9,427.7 C1447.7,427.0 1450.4,426.6 1453.2,426.6 C1458.7,426.6 1464.1,434.9 1469.6,434.9 C1471.5,434.9 1473.5,433.9 1475.4,431.8 C1476.6,430.6 1477.7,385.5 1478.9,385.5 C1479.8,385.5 1480.6,385.7 1481.5,386.0 C1482.3,386.3 1483.2,436.9 1484.0,436.9 C1486.7,436.9 1489.5,432.8 1492.2,432.8 C1497.7,432.8 1503.2,435.9 1508.7,435.9 C1514.2,435.9 1519.6,435.2 1525.1,433.8 C1528.5,432.9 1532.0,426.6 1535.4,426.6 C1538.8,426.6 1542.3,430.3 1545.7,431.8 C1548.4,433.0 1551.2,434.4 1553.9,434.9 C1557.3,435.6 1560.8,435.9 1564.2,435.9 C1566.9,435.9 1569.6,429.7 1572.3,429.7 C1578.5,429.7 1584.6,434.9 1590.8,434.9 C1595.3,434.9 1599.7,425.6 1604.2,425.6 C1605.9,425.6 1607.6,436.9 1609.3,436.9 C1612.7,436.9 1616.2,430.7 1619.6,430.7 C1621.7,430.7 1623.7,436.9 1625.8,436.9 C1629.9,436.9 1634.0,431.8 1638.1,431.8 C1642.2,431.8 1646.3,437.9 1650.4,437.9 C1652.5,437.9 1654.5,425.6 1656.6,425.6 C1659.3,425.6 1662.1,431.8 1664.8,431.8 C1669.3,431.8 1673.7,425.6 1678.2,425.6 C1681.3,425.6 1684.3,431.8 1687.4,431.8 C1690.2,431.8 1692.9,425.6 1695.7,425.6 C1699.8,425.6 1703.9,427.9 1708.0,429.7 C1710.7,430.9 1713.3,433.7 1716.0,433.7 C1718.8,433.7 1721.6,421.4 1724.4,421.4 C1727.8,421.4 1731.2,428.5 1734.6,428.5 C1736.7,428.5 1738.7,425.5 1740.8,425.5 C1743.5,425.5 1746.3,429.6 1749.0,429.6 C1751.1,429.6 1753.1,421.4 1755.2,421.4 C1757.9,421.4 1760.7,422.2 1763.4,423.4 C1766.8,424.9 1770.3,430.6 1773.7,430.6 C1776.4,430.6 1779.2,428.5 1781.9,428.5 C1786.0,428.5 1790.1,432.5 1794.2,433.7 C1797.6,434.7 1801.1,435.7 1804.5,435.7 C1807.9,435.7 1811.3,434.3 1814.7,431.6 C1816.4,430.2 1818.2,424.4 1819.9,424.4 C1823.0,424.4 1826.0,435.7 1829.1,435.7 C1832.5,435.7 1836.0,430.6 1839.4,430.6 C1843.5,430.6 1847.6,436.8 1851.7,436.8 C1854.1,436.8 1856.5,425.5 1858.9,425.5 C1860.3,425.5 1861.6,428.2 1863.0,429.6" fill="none" stroke="#9ccbe0" stroke-width="2" stroke-dasharray="0.01 4" stroke-linecap="round"/>
<path d="M1419.2,394.8 C1420.9,393.8 1422.7,391.7 1424.4,391.7 C1426.5,391.7 1428.5,392.0 1430.6,392.7 C1431.6,393.0 1432.6,401.0 1433.6,403.0 C1434.6,405.1 1435.7,404.7 1436.7,406.1 C1437.7,407.5 1438.8,411.2 1439.8,411.2 C1441.2,411.2 1442.5,403.0 1443.9,398.9 C1445.6,393.8 1447.3,387.6 1449.0,383.5 C1450.7,379.3 1452.5,374.2 1454.2,374.2 C1455.9,374.2 1457.6,382.0 1459.3,382.0 C1461.0,382.0 1462.8,379.5 1464.5,378.3 C1466.2,377.1 1467.9,374.8 1469.6,374.8 C1471.0,374.8 1472.3,383.4 1473.7,386.5 C1475.8,391.2 1477.8,394.8 1479.9,394.8 C1481.3,394.8 1482.6,387.5 1484.0,384.5 C1485.7,380.8 1487.4,375.2 1489.1,375.2 C1490.8,375.2 1492.6,376.6 1494.3,379.4 C1496.0,382.1 1497.7,394.8 1499.4,394.8 C1501.1,394.8 1502.9,385.5 1504.6,385.5 C1506.3,385.5 1508.0,405.1 1509.7,405.1 C1511.4,405.1 1513.1,404.1 1514.8,402.0 C1516.2,400.3 1517.5,377.9 1518.9,377.9 C1520.6,377.9 1522.4,392.7 1524.1,392.7 C1525.8,392.7 1527.5,385.5 1529.2,385.5 C1531.3,385.5 1533.3,388.7 1535.4,389.6 C1537.1,390.3 1538.8,390.0 1540.5,390.7 C1541.9,391.3 1543.2,394.8 1544.6,394.8 C1546.3,394.8 1548.1,385.5 1549.8,385.5 C1551.5,385.5 1553.2,386.5 1554.9,386.5 C1556.5,386.5 1558.0,368.7 1559.6,368.7 C1560.8,368.7 1561.9,383.0 1563.1,384.5 C1564.1,385.8 1565.2,385.3 1566.2,386.5 C1567.2,387.7 1568.2,391.7 1569.2,391.7 C1570.9,391.7 1572.7,348.5 1574.4,348.5 C1576.1,348.5 1577.8,360.9 1579.5,360.9 C1581.1,360.9 1582.7,330.0 1584.3,330.0 C1586.1,330.0 1588.0,344.4 1589.8,344.4 C1591.5,344.4 1593.2,319.7 1594.9,319.7 C1596.3,319.7 1597.7,347.1 1599.1,351.6 C1600.8,357.1 1602.5,356.4 1604.2,359.8 C1605.9,363.2 1607.6,368.1 1609.3,372.2 C1610.9,376.0 1612.5,383.5 1614.1,383.5 C1615.9,383.5 1617.8,370.9 1619.6,357.8 C1621.3,345.6 1623.0,309.5 1624.7,309.5 C1626.4,309.5 1628.2,323.1 1629.9,327.0 C1631.6,330.9 1633.3,329.0 1635.0,333.1 C1636.4,336.4 1637.7,351.4 1639.1,355.7 C1640.8,361.2 1642.6,361.9 1644.3,363.9 C1647.4,367.4 1650.4,369.1 1653.5,369.1 C1655.6,369.1 1657.6,365.0 1659.7,365.0 C1661.4,365.0 1663.1,366.0 1664.8,368.0 C1666.2,369.6 1667.5,380.4 1668.9,380.4 C1670.6,380.4 1672.4,362.9 1674.1,362.9 C1675.8,362.9 1677.5,368.2 1679.2,370.1 C1681.3,372.5 1683.3,375.2 1685.4,375.2 C1686.8,375.2 1688.1,375.2 1689.5,375.2 C1691.0,375.2 1692.5,367.0 1694.0,367.0 C1695.8,367.0 1697.6,374.2 1699.4,374.2 C1700.9,374.2 1702.4,349.2 1703.9,344.4 C1705.6,338.9 1707.3,341.7 1709.0,336.2 C1710.8,330.3 1712.7,287.9 1714.5,287.9 C1716.1,287.9 1717.6,361.5 1719.2,367.0 C1720.9,373.1 1722.7,376.2 1724.4,376.2 C1726.1,376.2 1727.8,369.7 1729.5,367.5 C1731.2,365.3 1732.9,364.9 1734.6,362.8 C1736.3,360.6 1738.1,354.6 1739.8,354.6 C1741.5,354.6 1743.2,356.4 1744.9,358.7 C1746.3,360.5 1747.6,364.3 1749.0,365.9 C1750.7,368.0 1752.5,369.0 1754.2,369.0 C1755.9,369.0 1757.6,364.0 1759.3,359.7 C1761.0,355.4 1762.7,344.0 1764.4,343.3 C1766.1,342.6 1767.9,342.3 1769.6,342.3 C1771.0,342.3 1772.3,361.8 1773.7,361.8 C1776.1,361.8 1778.5,361.8 1780.9,361.8 C1782.0,361.8 1783.2,349.5 1784.3,349.5 C1785.9,349.5 1787.5,362.0 1789.1,365.9 C1790.8,370.1 1792.5,373.1 1794.2,373.1 C1795.9,373.1 1797.6,349.9 1799.3,349.9 C1801.0,349.9 1802.8,355.6 1804.5,355.6 C1806.2,355.6 1807.9,353.6 1809.6,353.6 C1811.2,353.6 1812.7,369.0 1814.3,369.0 C1816.2,369.0 1818.0,362.8 1819.9,362.8 C1821.3,362.8 1822.6,372.1 1824.0,372.1 C1826.0,372.1 1828.1,371.3 1830.1,369.6 C1831.1,368.8 1832.2,348.1 1833.2,339.2 C1834.9,324.2 1836.7,304.3 1838.4,304.3 C1840.4,304.3 1842.5,306.3 1844.5,306.3 C1846.2,306.3 1848.0,293.0 1849.7,293.0 C1851.4,293.0 1853.1,298.1 1854.8,298.1 C1856.5,298.1 1858.2,298.1 1859.9,298.1 C1861.3,298.1 1862.6,292.6 1864.0,289.9" fill="none" stroke="#4ba3cc" stroke-width="2" stroke-linejoin="round" stroke-linecap="round"/>
<line x1="1480" y1="500.5" x2="1492" y2="500.5" stroke="#4ba3cc" stroke-width="2" stroke-linecap="round"/>
<text x="1500" y="504.5" font-size="11" fill="#616161">Sep 17–Dec 15, 2024</text>
<line x1="1626" y1="500.5" x2="1638" y2="500.5" stroke="#9ccbe0" stroke-width="2" stroke-dasharray="0.01 4" stroke-linecap="round"/>
<text x="1646" y="504.5" font-size="11" fill="#616161">Jun 19–Sep 16, 2024</text>
</svg>
</div>
<div class="card" style="left:264px;top:491px;width:529px;height:353px">
<div class="ctitle sb" style="letter-spacing:0.473px">Online store conversion rate</div>
<div class="big"><span style="letter-spacing:-0.46px">3.12%</span><span class="pct"><svg width="7" height="7" viewBox="0 0 7 7" style="margin-right:4px;margin-left:1px;vertical-align:0px"><path d="M1 6 L3.6 3.4" stroke="#29845a" stroke-width="1.6" stroke-linecap="round"/><path d="M2.3 1 L6 1 L6 4.7 Z" fill="#29845a" stroke="#29845a" stroke-width="0.9" stroke-linejoin="round"/></svg>3.6K%</span></div>
<div class="abs" style="left:16px;top:98.5px;font-size:14px;color:#303030;line-height:16px;white-space:nowrap">Added to cart</div>
<div class="abs" style="left:16px;top:117.8px;font-size:13px;color:#616161;line-height:16px;white-space:nowrap">1,331 sessions</div>
<div class="abs" style="right:137.5px;top:108.3px;font-size:14px;color:#303030;line-height:16px">2.24%</div>
<div class="abs" style="right:15px;top:109.6px;font-size:11.5px;font-weight:700;color:#29845a;line-height:14px;white-space:nowrap"><svg width="7" height="7" viewBox="0 0 7 7" style="margin-right:4px;margin-left:1px;vertical-align:0px"><path d="M1 6 L3.6 3.4" stroke="#29845a" stroke-width="1.6" stroke-linecap="round"/><path d="M2.3 1 L6 1 L6 4.7 Z" fill="#29845a" stroke="#29845a" stroke-width="0.9" stroke-linejoin="round"/></svg>1.4K%</div>
<div class="abs" style="left:0;top:148.6px;width:529px;height:1px;background:#e3e3e3"></div>
<div class="abs" style="left:16px;top:163.5px;font-size:14px;color:#303030;line-height:16px;white-space:nowrap">Reached checkout</div>
<div class="abs" style="left:16px;top:182.8px;font-size:13px;color:#616161;line-height:16px;white-space:nowrap">2,195 sessions</div>
<div class="abs" style="right:137.5px;top:173.3px;font-size:14px;color:#303030;line-height:16px">3.69%</div>
<div class="abs" style="right:15px;top:174.6px;font-size:11.5px;font-weight:700;color:#29845a;line-height:14px;white-space:nowrap"><svg width="7" height="7" viewBox="0 0 7 7" style="margin-right:4px;margin-left:1px;vertical-align:0px"><path d="M1 6 L3.6 3.4" stroke="#29845a" stroke-width="1.6" stroke-linecap="round"/><path d="M2.3 1 L6 1 L6 4.7 Z" fill="#29845a" stroke="#29845a" stroke-width="0.9" stroke-linejoin="round"/></svg>2.8K%</div>
<div class="abs" style="left:0;top:213.6px;width:529px;height:1px;background:#e3e3e3"></div>
<div class="abs" style="left:16px;top:228.5px;font-size:14px;color:#303030;line-height:16px;white-space:nowrap">Sessions converted</div>
<div class="abs" style="left:16px;top:247.8px;font-size:13px;color:#616161;line-height:16px;white-space:nowrap">1,856 sessions</div>
<div class="abs" style="right:137.5px;top:238.3px;font-size:14px;color:#303030;line-height:16px">3.12%</div>
<div class="abs" style="right:15px;top:239.6px;font-size:11.5px;font-weight:700;color:#29845a;line-height:14px;white-space:nowrap"><svg width="7" height="7" viewBox="0 0 7 7" style="margin-right:4px;margin-left:1px;vertical-align:0px"><path d="M1 6 L3.6 3.4" stroke="#29845a" stroke-width="1.6" stroke-linecap="round"/><path d="M2.3 1 L6 1 L6 4.7 Z" fill="#29845a" stroke="#29845a" stroke-width="0.9" stroke-linejoin="round"/></svg>3.6K%</div>
</div>
<div class="card" style="left:810px;top:491px;width:529px;height:353px">
<div class="ctitle sb" style="letter-spacing:0.485px">Total orders</div>
<div class="big"><span style="letter-spacing:0.94px">2,998</span><span class="pct"><svg width="7" height="7" viewBox="0 0 7 7" style="margin-right:4px;margin-left:1px;vertical-align:0px"><path d="M1 6 L3.6 3.4" stroke="#29845a" stroke-width="1.6" stroke-linecap="round"/><path d="M2.3 1 L6 1 L6 4.7 Z" fill="#29845a" stroke="#29845a" stroke-width="0.9" stroke-linejoin="round"/></svg>75%</span></div>
<svg class="abs" style="left:0;top:0" width="529" height="353" viewBox="810 545 529 353">
<defs><linearGradient id="g810545" x1="0" y1="0" x2="0" y2="1"><stop offset="0" stop-color="#4ba3cc" stop-opacity="0.075"/><stop offset="1" stop-color="#4ba3cc" stop-opacity="0.01"/></linearGradient></defs>
<line x1="864" y1="633.5" x2="1320" y2="633.5" stroke="#ebebeb" stroke-width="1"/>
<text x="827.5" y="637.5" font-size="11" fill="#616161" letter-spacing="0.7">80</text>
<line x1="864" y1="678.5" x2="1320" y2="678.5" stroke="#ebebeb" stroke-width="1"/>
<text x="827.5" y="682.5" font-size="11" fill="#616161" letter-spacing="0.7">60</text>
<line x1="864" y1="723.3" x2="1320" y2="723.3" stroke="#ebebeb" stroke-width="1"/>
<text x="827.5" y="727.3" font-size="11" fill="#616161" letter-spacing="0.7">40</text>
<line x1="864" y1="767.8" x2="1320" y2="767.8" stroke="#ebebeb" stroke-width="1"/>
<text x="827.5" y="771.8" font-size="11" fill="#616161" letter-spacing="0.7">20</text>
<line x1="864" y1="812.5" x2="1320" y2="812.5" stroke="#ebebeb" stroke-width="1"/>
<text x="827.5" y="816.5" font-size="11" fill="#616161" letter-spacing="0.7">0</text>
<text x="864.5" y="838" font-size="11" fill="#616161" text-anchor="middle">Sep 17</text>
<text x="926" y="838" font-size="11" fill="#616161" text-anchor="middle">Sep 29</text>
<text x="987.6" y="838" font-size="11" fill="#616161" text-anchor="middle">Oct 11</text>
<text x="1048.6" y="838" font-size="11" fill="#616161" text-anchor="middle">Oct 23</text>
<text x="1110" y="838" font-size="11" fill="#616161" text-anchor="middle">Nov 4</text>
<text x="1171" y="838" font-size="11" fill="#616161" text-anchor="middle">Nov 16</text>
<text x="1232.5" y="838" font-size="11" fill="#616161" text-anchor="middle">Nov 28</text>
<text x="1294" y="838" font-size="11" fill="#616161" text-anchor="middle">Dec 10</text>
<path d="M865.3,756.5 C866.7,758.9 868.0,763.7 869.4,763.7 C871.1,763.7 872.8,735.0 874.5,735.0 C876.6,735.0 878.6,736.7 880.7,740.1 C882.3,742.7 883.8,785.3 885.4,785.3 C887.3,785.3 889.1,782.2 891.0,776.1 C892.4,771.6 893.7,740.4 895.1,732.9 C896.5,725.4 897.8,724.9 899.2,721.6 C901.3,716.7 903.3,710.3 905.4,710.3 C907.1,710.3 908.8,745.2 910.5,745.2 C912.2,745.2 913.9,737.0 915.6,737.0 C917.3,737.0 919.1,752.9 920.8,760.7 C922.5,768.3 924.2,783.3 925.9,783.3 C927.6,783.3 929.4,755.0 931.1,746.3 C932.8,737.7 934.5,730.9 936.2,730.9 C937.9,730.9 939.6,756.5 941.3,756.5 C943.0,756.5 944.8,750.4 946.5,750.4 C948.2,750.4 949.9,752.4 951.6,756.5 C953.3,760.6 955.0,783.3 956.7,783.3 C958.1,783.3 959.5,769.5 960.9,764.8 C962.6,759.1 964.3,759.6 966.0,754.5 C967.9,748.7 969.9,730.9 971.8,730.9 C973.6,730.9 975.5,755.0 977.3,756.5 C979.0,757.9 980.7,758.1 982.4,758.6 C984.1,759.1 985.9,758.9 987.6,759.6 C989.3,760.3 991.0,779.2 992.7,779.2 C994.4,779.2 996.2,765.7 997.9,758.6 C999.6,751.6 1001.3,745.8 1003.0,737.0 C1004.7,728.2 1006.4,705.6 1008.1,705.6 C1009.7,705.6 1011.2,728.7 1012.8,733.9 C1014.7,740.1 1016.5,743.2 1018.4,743.2 C1020.1,743.2 1021.8,740.1 1023.5,740.1 C1025.2,740.1 1026.9,779.2 1028.6,779.2 C1030.3,779.2 1032.1,770.0 1033.8,760.7 C1035.2,753.4 1036.5,732.9 1037.9,732.9 C1040.0,732.9 1042.0,735.0 1044.1,737.0 C1045.8,738.6 1047.5,742.7 1049.2,743.2 C1051.3,743.9 1053.3,743.5 1055.4,744.2 C1056.8,744.6 1058.1,748.0 1059.5,750.4 C1061.2,753.4 1062.9,760.7 1064.6,760.7 C1066.3,760.7 1068.0,756.5 1069.7,753.5 C1071.4,750.4 1073.2,749.7 1074.9,742.2 C1076.5,735.4 1078.0,709.3 1079.6,709.3 C1081.1,709.3 1082.6,718.2 1084.1,723.7 C1085.8,730.0 1087.6,745.2 1089.3,745.2 C1091.0,745.2 1092.7,739.1 1094.4,739.1 C1096.0,739.1 1097.5,772.0 1099.1,772.0 C1101.3,772.0 1103.5,772.0 1105.7,772.0 C1107.1,772.0 1108.4,703.1 1109.8,703.1 C1111.9,703.1 1113.9,704.1 1116.0,706.2 C1117.4,707.6 1118.7,738.0 1120.1,738.0 C1121.8,738.0 1123.5,719.1 1125.2,719.1 C1126.9,719.1 1128.7,735.2 1130.4,743.2 C1132.1,751.1 1133.8,763.4 1135.5,766.8 C1137.2,770.3 1139.0,772.0 1140.7,772.0 C1142.4,772.0 1144.1,725.7 1145.8,725.7 C1147.5,725.7 1149.2,779.2 1150.9,779.2 C1152.7,779.2 1154.4,688.7 1156.2,688.7 C1157.9,688.7 1159.5,718.5 1161.2,718.5 C1162.9,718.5 1164.6,710.3 1166.3,710.3 C1168.0,710.3 1169.7,749.4 1171.4,749.4 C1173.1,749.4 1174.9,748.0 1176.6,745.2 C1178.3,742.5 1180.0,690.4 1181.7,690.4 C1183.4,690.4 1185.2,715.4 1186.9,715.4 C1188.6,715.4 1190.3,704.1 1192.0,704.1 C1193.7,704.1 1195.4,718.5 1197.1,718.5 C1198.8,718.5 1200.6,710.3 1202.3,710.3 C1204.0,710.3 1205.7,750.4 1207.4,758.6 C1209.0,766.1 1210.5,769.9 1212.1,769.9 C1213.6,769.9 1215.2,738.9 1216.7,728.8 C1218.6,716.3 1220.5,708.2 1222.4,708.2 C1224.1,708.2 1225.7,725.3 1227.4,725.3 C1229.2,725.3 1230.9,721.7 1232.7,714.4 C1234.4,707.4 1236.1,638.4 1237.8,638.4 C1239.5,638.4 1241.3,747.3 1243.0,747.3 C1244.8,747.3 1246.7,747.3 1248.5,747.3 C1250.2,747.3 1252.0,715.4 1253.7,715.4 C1255.4,715.4 1257.1,716.8 1258.8,719.6 C1260.4,722.2 1261.9,738.0 1263.5,738.0 C1265.2,738.0 1266.8,704.1 1268.5,704.1 C1270.1,704.1 1271.6,742.6 1273.2,743.2 C1276.6,744.5 1280.1,745.2 1283.5,745.2 C1285.3,745.2 1287.2,683.6 1289.0,683.6 C1290.9,683.6 1292.9,718.5 1294.8,718.5 C1296.5,718.5 1298.2,714.3 1299.9,709.3 C1301.5,704.7 1303.0,690.4 1304.6,690.4 C1306.1,690.4 1307.7,717.6 1309.2,727.8 C1310.9,739.1 1312.6,753.5 1314.3,753.5 C1316.0,753.5 1317.7,748.0 1319.4,745.2 L1319.4,812.5 L865.3,812.5 Z" fill="url(#g810545)"/>
<path d="M865.3,760.7 C867.3,769.6 869.4,779.4 871.4,787.4 C873.8,796.8 876.2,812.0 878.6,812.0 C882.7,812.0 886.9,806.9 891.0,806.9 C893.0,806.9 895.1,813.1 897.1,813.1 C899.2,813.1 901.2,748.3 903.3,748.3 C905.7,748.3 908.1,758.6 910.5,764.8 C912.2,769.2 913.9,779.2 915.6,779.2 C918.7,779.2 921.8,748.3 924.9,748.3 C927.3,748.3 929.7,767.9 932.1,767.9 C933.8,767.9 935.5,754.5 937.2,754.5 C940.3,754.5 943.4,790.5 946.5,790.5 C951.6,790.5 956.8,748.3 961.9,748.3 C963.9,748.3 966.0,760.7 968.0,760.7 C969.7,760.7 971.5,749.4 973.2,749.4 C974.6,749.4 975.9,795.6 977.3,795.6 C980.4,795.6 983.5,772.0 986.6,772.0 C988.3,772.0 990.0,779.2 991.7,779.2 C994.1,779.2 996.5,758.6 998.9,758.6 C999.6,758.6 1000.2,778.1 1000.9,778.1 C1005.0,778.1 1009.1,759.6 1013.2,759.6 C1016.6,759.6 1020.1,790.5 1023.5,790.5 C1025.9,790.5 1028.3,785.8 1030.7,778.1 C1033.1,770.4 1035.5,744.2 1037.9,744.2 C1041.7,744.2 1045.4,774.0 1049.2,774.0 C1050.9,774.0 1052.6,754.5 1054.3,754.5 C1057.1,754.5 1059.8,795.6 1062.6,795.6 C1066.7,795.6 1070.8,765.8 1074.9,765.8 C1078.0,765.8 1081.0,785.3 1084.1,785.3 C1085.8,785.3 1087.6,769.9 1089.3,769.9 C1091.0,769.9 1092.7,787.4 1094.4,787.4 C1096.1,787.4 1097.9,773.0 1099.6,773.0 C1103.0,773.0 1106.4,777.1 1109.8,777.1 C1111.9,777.1 1113.9,759.6 1116.0,759.6 C1119.4,759.6 1122.9,779.4 1126.3,785.3 C1129.4,790.5 1132.4,794.6 1135.5,794.6 C1137.2,794.6 1139.0,741.1 1140.7,741.1 C1144.1,741.1 1147.5,766.4 1150.9,775.1 C1155.7,787.4 1160.5,796.6 1165.3,796.6 C1168.7,796.6 1172.2,755.5 1175.6,755.5 C1179.0,755.5 1182.4,780.2 1185.8,780.2 C1187.9,780.2 1189.9,756.5 1192.0,756.5 C1194.1,756.5 1196.1,792.5 1198.2,792.5 C1200.6,792.5 1203.0,781.4 1205.4,766.8 C1207.4,754.4 1209.5,716.5 1211.5,716.5 C1213.2,716.5 1215.0,756.5 1216.7,756.5 C1220.1,756.5 1223.5,746.3 1226.9,746.3 C1230.3,746.3 1233.8,772.0 1237.2,772.0 C1241.0,772.0 1244.7,726.7 1248.5,726.7 C1250.0,726.7 1251.5,728.8 1253.0,733.0 C1254.9,738.4 1256.9,795.6 1258.8,795.6 C1260.5,795.6 1262.2,753.5 1263.9,753.5 C1267.3,753.5 1270.8,775.1 1274.2,775.1 C1277.3,775.1 1280.4,702.1 1283.5,702.1 C1285.2,702.1 1286.9,722.7 1288.6,727.8 C1292.7,740.1 1296.8,734.0 1300.9,746.3 C1303.0,752.5 1305.0,771.4 1307.1,772.0 C1309.5,772.7 1311.9,773.0 1314.3,773.0 C1316.0,773.0 1317.7,748.3 1319.4,736.0" fill="none" stroke="#9ccbe0" stroke-width="2" stroke-dasharray="0.01 4" stroke-linecap="round"/>
<path d="M865.3,756.5 C866.7,758.9 868.0,763.7 869.4,763.7 C871.1,763.7 872.8,735.0 874.5,735.0 C876.6,735.0 878.6,736.7 880.7,740.1 C882.3,742.7 883.8,785.3 885.4,785.3 C887.3,785.3 889.1,782.2 891.0,776.1 C892.4,771.6 893.7,740.4 895.1,732.9 C896.5,725.4 897.8,724.9 899.2,721.6 C901.3,716.7 903.3,710.3 905.4,710.3 C907.1,710.3 908.8,745.2 910.5,745.2 C912.2,745.2 913.9,737.0 915.6,737.0 C917.3,737.0 919.1,752.9 920.8,760.7 C922.5,768.3 924.2,783.3 925.9,783.3 C927.6,783.3 929.4,755.0 931.1,746.3 C932.8,737.7 934.5,730.9 936.2,730.9 C937.9,730.9 939.6,756.5 941.3,756.5 C943.0,756.5 944.8,750.4 946.5,750.4 C948.2,750.4 949.9,752.4 951.6,756.5 C953.3,760.6 955.0,783.3 956.7,783.3 C958.1,783.3 959.5,769.5 960.9,764.8 C962.6,759.1 964.3,759.6 966.0,754.5 C967.9,748.7 969.9,730.9 971.8,730.9 C973.6,730.9 975.5,755.0 977.3,756.5 C979.0,757.9 980.7,758.1 982.4,758.6 C984.1,759.1 985.9,758.9 987.6,759.6 C989.3,760.3 991.0,779.2 992.7,779.2 C994.4,779.2 996.2,765.7 997.9,758.6 C999.6,751.6 1001.3,745.8 1003.0,737.0 C1004.7,728.2 1006.4,705.6 1008.1,705.6 C1009.7,705.6 1011.2,728.7 1012.8,733.9 C1014.7,740.1 1016.5,743.2 1018.4,743.2 C1020.1,743.2 1021.8,740.1 1023.5,740.1 C1025.2,740.1 1026.9,779.2 1028.6,779.2 C1030.3,779.2 1032.1,770.0 1033.8,760.7 C1035.2,753.4 1036.5,732.9 1037.9,732.9 C1040.0,732.9 1042.0,735.0 1044.1,737.0 C1045.8,738.6 1047.5,742.7 1049.2,743.2 C1051.3,743.9 1053.3,743.5 1055.4,744.2 C1056.8,744.6 1058.1,748.0 1059.5,750.4 C1061.2,753.4 1062.9,760.7 1064.6,760.7 C1066.3,760.7 1068.0,756.5 1069.7,753.5 C1071.4,750.4 1073.2,749.7 1074.9,742.2 C1076.5,735.4 1078.0,709.3 1079.6,709.3 C1081.1,709.3 1082.6,718.2 1084.1,723.7 C1085.8,730.0 1087.6,745.2 1089.3,745.2 C1091.0,745.2 1092.7,739.1 1094.4,739.1 C1096.0,739.1 1097.5,772.0 1099.1,772.0 C1101.3,772.0 1103.5,772.0 1105.7,772.0 C1107.1,772.0 1108.4,703.1 1109.8,703.1 C1111.9,703.1 1113.9,704.1 1116.0,706.2 C1117.4,707.6 1118.7,738.0 1120.1,738.0 C1121.8,738.0 1123.5,719.1 1125.2,719.1 C1126.9,719.1 1128.7,735.2 1130.4,743.2 C1132.1,751.1 1133.8,763.4 1135.5,766.8 C1137.2,770.3 1139.0,772.0 1140.7,772.0 C1142.4,772.0 1144.1,725.7 1145.8,725.7 C1147.5,725.7 1149.2,779.2 1150.9,779.2 C1152.7,779.2 1154.4,688.7 1156.2,688.7 C1157.9,688.7 1159.5,718.5 1161.2,718.5 C1162.9,718.5 1164.6,710.3 1166.3,710.3 C1168.0,710.3 1169.7,749.4 1171.4,749.4 C1173.1,749.4 1174.9,748.0 1176.6,745.2 C1178.3,742.5 1180.0,690.4 1181.7,690.4 C1183.4,690.4 1185.2,715.4 1186.9,715.4 C1188.6,715.4 1190.3,704.1 1192.0,704.1 C1193.7,704.1 1195.4,718.5 1197.1,718.5 C1198.8,718.5 1200.6,710.3 1202.3,710.3 C1204.0,710.3 1205.7,750.4 1207.4,758.6 C1209.0,766.1 1210.5,769.9 1212.1,769.9 C1213.6,769.9 1215.2,738.9 1216.7,728.8 C1218.6,716.3 1220.5,708.2 1222.4,708.2 C1224.1,708.2 1225.7,725.3 1227.4,725.3 C1229.2,725.3 1230.9,721.7 1232.7,714.4 C1234.4,707.4 1236.1,638.4 1237.8,638.4 C1239.5,638.4 1241.3,747.3 1243.0,747.3 C1244.8,747.3 1246.7,747.3 1248.5,747.3 C1250.2,747.3 1252.0,715.4 1253.7,715.4 C1255.4,715.4 1257.1,716.8 1258.8,719.6 C1260.4,722.2 1261.9,738.0 1263.5,738.0 C1265.2,738.0 1266.8,704.1 1268.5,704.1 C1270.1,704.1 1271.6,742.6 1273.2,743.2 C1276.6,744.5 1280.1,745.2 1283.5,745.2 C1285.3,745.2 1287.2,683.6 1289.0,683.6 C1290.9,683.6 1292.9,718.5 1294.8,718.5 C1296.5,718.5 1298.2,714.3 1299.9,709.3 C1301.5,704.7 1303.0,690.4 1304.6,690.4 C1306.1,690.4 1307.7,717.6 1309.2,727.8 C1310.9,739.1 1312.6,753.5 1314.3,753.5 C1316.0,753.5 1317.7,748.0 1319.4,745.2" fill="none" stroke="#4ba3cc" stroke-width="2" stroke-linejoin="round" stroke-linecap="round"/>
<line x1="934.5" y1="870.5" x2="946.5" y2="870.5" stroke="#4ba3cc" stroke-width="2" stroke-linecap="round"/>
<text x="954.5" y="874.5" font-size="11" fill="#616161">Sep 17–Dec 15, 2024</text>
<line x1="1080" y1="870.5" x2="1092" y2="870.5" stroke="#9ccbe0" stroke-width="2" stroke-dasharray="0.01 4" stroke-linecap="round"/>
<text x="1100" y="874.5" font-size="11" fill="#616161">Jun 19–Sep 16, 2024</text>
</svg>
</div>
<div class="card" style="left:1355px;top:491px;width:529px;height:353px">
<div class="ctitle sb" style="letter-spacing:0.383px">Average order value</div>
<div class="big"><span style="letter-spacing:0.49px">€153.54</span><span class="pct"><svg width="7" height="7" viewBox="0 0 7 7" style="margin-right:4px;margin-left:1px;vertical-align:0px"><path d="M1 6 L3.6 3.4" stroke="#29845a" stroke-width="1.6" stroke-linecap="round"/><path d="M2.3 1 L6 1 L6 4.7 Z" fill="#29845a" stroke="#29845a" stroke-width="0.9" stroke-linejoin="round"/></svg>1.7%</span></div>
<svg class="abs" style="left:0;top:0" width="529" height="353" viewBox="1355 545 529 353">
<defs><linearGradient id="g1355545" x1="0" y1="0" x2="0" y2="1"><stop offset="0" stop-color="#4ba3cc" stop-opacity="0.075"/><stop offset="1" stop-color="#4ba3cc" stop-opacity="0.01"/></linearGradient></defs>
<line x1="1424" y1="633.5" x2="1864" y2="633.5" stroke="#ebebeb" stroke-width="1"/>
<text x="1372.5" y="637.5" font-size="11" fill="#616161" letter-spacing="0.7">€800</text>
<line x1="1424" y1="678.5" x2="1864" y2="678.5" stroke="#ebebeb" stroke-width="1"/>
<text x="1372.5" y="682.5" font-size="11" fill="#616161" letter-spacing="0.7">€600</text>
<line x1="1424" y1="723.3" x2="1864" y2="723.3" stroke="#ebebeb" stroke-width="1"/>
<text x="1372.5" y="727.3" font-size="11" fill="#616161" letter-spacing="0.7">€400</text>
<line x1="1424" y1="767.8" x2="1864" y2="767.8" stroke="#ebebeb" stroke-width="1"/>
<text x="1372.5" y="771.8" font-size="11" fill="#616161" letter-spacing="0.7">€200</text>
<line x1="1424" y1="812.5" x2="1864" y2="812.5" stroke="#ebebeb" stroke-width="1"/>
<text x="1372.5" y="816.5" font-size="11" fill="#616161" letter-spacing="0.7">€0</text>
<text x="1424.6" y="838" font-size="11" fill="#616161" text-anchor="middle">Sep 17</text>
<text x="1488.8" y="838" font-size="11" fill="#616161" text-anchor="middle">Sep 30</text>
<text x="1553" y="838" font-size="11" fill="#616161" text-anchor="middle">Oct 13</text>
<text x="1617" y="838" font-size="11" fill="#616161" text-anchor="middle">Oct 26</text>
<text x="1681.6" y="838" font-size="11" fill="#616161" text-anchor="middle">Nov 8</text>
<text x="1746" y="838" font-size="11" fill="#616161" text-anchor="middle">Nov 21</text>
<text x="1810" y="838" font-size="11" fill="#616161" text-anchor="middle">Dec 4</text>
<path d="M1425.3,779.6 C1428.4,778.9 1431.4,777.5 1434.5,777.5 C1437.9,777.5 1441.4,783.7 1444.8,783.7 C1446.2,783.7 1447.5,780.7 1448.9,780.6 C1455.4,780.3 1461.9,780.5 1468.4,780.2 C1470.5,780.1 1472.5,778.1 1474.6,778.1 C1476.0,778.1 1477.3,780.2 1478.7,780.2 C1483.5,780.2 1488.3,779.9 1493.1,779.2 C1495.2,778.9 1497.2,776.1 1499.3,776.1 C1501.0,776.1 1502.7,781.6 1504.4,781.6 C1505.8,781.6 1507.1,778.8 1508.5,778.8 C1510.2,778.8 1512.0,781.6 1513.7,781.6 C1515.4,781.6 1517.1,778.8 1518.8,778.8 C1520.5,778.8 1522.2,782.2 1523.9,782.2 C1525.6,782.2 1527.4,781.2 1529.1,779.2 C1530.6,777.5 1532.1,766.8 1533.6,766.8 C1534.8,766.8 1536.1,780.2 1537.3,780.2 C1539.0,780.2 1540.7,778.4 1542.4,778.1 C1544.5,777.7 1546.5,777.5 1548.6,777.5 C1550.0,777.5 1551.3,782.2 1552.7,782.2 C1554.6,782.2 1556.4,776.1 1558.3,776.1 C1559.9,776.1 1561.4,785.3 1563.0,785.3 C1565.4,785.3 1567.8,783.7 1570.2,782.2 C1572.9,780.5 1575.7,775.1 1578.4,775.1 C1579.8,775.1 1581.1,780.6 1582.5,780.6 C1584.9,780.6 1587.3,780.6 1589.7,780.6 C1591.8,780.6 1593.8,779.3 1595.9,778.8 C1598.0,778.3 1600.0,777.5 1602.1,777.5 C1603.8,777.5 1605.5,780.6 1607.2,780.6 C1608.9,780.6 1610.6,776.7 1612.3,776.7 C1614.0,776.7 1615.8,780.6 1617.5,780.6 C1619.2,780.6 1620.9,780.6 1622.6,780.6 C1624.3,780.6 1626.0,776.1 1627.7,776.1 C1629.4,776.1 1631.2,779.6 1632.9,779.6 C1634.3,779.6 1635.6,772.0 1637.0,772.0 C1639.6,772.0 1642.2,774.2 1644.8,776.0 C1647.2,777.6 1649.6,782.0 1652.0,782.0 C1653.8,782.0 1655.6,767.8 1657.4,767.8 C1658.8,767.8 1660.2,778.4 1661.6,778.4 C1666.0,778.4 1670.4,778.1 1674.8,778.1 C1677.2,778.1 1679.6,781.4 1682.0,781.4 C1685.2,781.4 1688.3,778.6 1691.5,778.6 C1693.1,778.6 1694.7,779.6 1696.3,779.6 C1697.9,779.6 1699.5,768.8 1701.1,768.8 C1703.1,768.8 1705.1,771.1 1707.1,773.0 C1708.7,774.5 1710.3,778.4 1711.9,778.4 C1713.5,778.4 1715.1,776.0 1716.7,776.0 C1718.3,776.0 1719.9,780.2 1721.5,780.2 C1723.1,780.2 1724.7,774.8 1726.3,774.8 C1727.9,774.8 1729.5,780.5 1731.1,780.5 C1734.7,780.5 1738.3,778.1 1741.9,778.1 C1744.7,778.1 1747.5,779.0 1750.3,779.0 C1751.9,779.0 1753.5,776.6 1755.1,776.6 C1758.3,776.6 1761.5,779.0 1764.7,779.0 C1766.7,779.0 1768.6,776.6 1770.6,776.6 C1772.2,776.6 1773.8,781.4 1775.4,781.4 C1777.0,781.4 1778.6,777.2 1780.2,776.6 C1782.2,775.8 1784.2,776.2 1786.2,775.4 C1787.6,774.8 1789.0,773.0 1790.4,773.0 C1791.8,773.0 1793.2,777.5 1794.6,778.4 C1798.2,780.8 1801.8,782.0 1805.4,782.0 C1807.0,782.0 1808.6,781.4 1810.2,780.2 C1811.8,779.0 1813.4,773.3 1815.0,773.3 C1816.6,773.3 1818.2,781.4 1819.8,781.4 C1821.4,781.4 1823.0,779.6 1824.6,779.6 C1826.6,779.6 1828.6,782.2 1830.6,782.2 C1831.8,782.2 1833.0,780.3 1834.2,780.2 C1839.4,779.8 1844.6,780.0 1849.8,779.6 C1851.6,779.5 1853.4,775.7 1855.2,775.7 C1857.0,775.7 1858.7,778.4 1860.5,779.6 C1861.7,780.4 1862.9,781.2 1864.1,782.0 L1864.1,812.5 L1425.3,812.5 Z" fill="url(#g1355545)"/>
<path d="M1425.3,779.2 C1428.0,779.2 1430.8,779.2 1433.5,779.2 C1435.2,779.2 1436.9,812.0 1438.6,812.0 C1440.7,812.0 1442.7,807.5 1444.8,807.5 C1448.2,807.5 1451.7,813.1 1455.1,813.1 C1457.1,813.1 1459.2,810.0 1461.2,803.8 C1461.9,801.7 1462.6,780.6 1463.3,780.2 C1465.5,779.1 1467.8,778.6 1470.0,778.5 C1479.1,778.2 1488.1,778.1 1497.2,778.1 C1505.4,778.1 1513.7,783.3 1521.9,783.3 C1526.0,783.3 1530.1,782.9 1534.2,782.2 C1536.9,781.7 1539.7,778.0 1542.4,778.0 C1545.2,778.0 1547.9,783.3 1550.7,783.3 C1553.4,783.3 1556.2,777.2 1558.9,777.1 C1561.6,777.0 1564.3,777.0 1567.0,777.0 C1569.4,777.0 1571.9,786.4 1574.3,786.4 C1576.0,786.4 1577.7,781.9 1579.4,773.0 C1580.6,766.5 1581.9,643.5 1583.1,643.5 C1584.3,643.5 1585.4,767.7 1586.6,773.0 C1588.3,780.9 1590.1,784.9 1591.8,784.9 C1594.5,784.9 1597.3,780.2 1600.0,780.2 C1606.8,780.2 1613.7,783.7 1620.5,783.7 C1623.9,783.7 1627.4,783.0 1630.8,782.2 C1634.2,781.4 1637.7,778.8 1641.1,778.8 C1646.3,778.8 1651.6,782.6 1656.8,782.6 C1659.5,782.6 1662.3,782.0 1665.0,782.0 C1668.0,782.0 1671.0,782.0 1674.0,782.0 C1677.8,782.0 1681.7,782.6 1685.5,782.6 C1690.3,782.6 1695.2,780.8 1700.0,780.8 C1704.8,780.8 1709.5,782.6 1714.3,782.6 C1718.2,782.6 1722.1,779.6 1726.0,779.6 C1732.5,779.6 1739.0,782.6 1745.5,782.6 C1750.3,782.6 1755.2,779.6 1760.0,779.6 C1764.7,779.6 1769.3,781.4 1774.0,781.4 C1778.0,781.4 1782.0,779.6 1786.0,779.6 C1787.7,779.6 1789.3,780.8 1791.0,780.8 C1795.0,780.8 1799.0,779.0 1803.0,777.2 C1804.2,776.7 1805.4,775.4 1806.6,775.4 C1807.7,775.4 1808.9,779.6 1810.0,779.6 C1813.3,779.6 1816.7,779.6 1820.0,779.6 C1823.9,779.6 1827.9,779.0 1831.8,777.8 C1833.4,777.3 1835.0,773.7 1836.6,772.4 C1839.0,770.4 1841.4,769.4 1843.8,769.4 C1845.0,769.4 1846.2,773.9 1847.4,776.0 C1848.6,778.1 1849.8,782.0 1851.0,782.0 C1852.7,782.0 1854.3,779.6 1856.0,779.6 C1858.7,779.6 1861.3,780.4 1864.0,780.8" fill="none" stroke="#9ccbe0" stroke-width="2" stroke-dasharray="0.01 4" stroke-linecap="round"/>
<path d="M1425.3,779.6 C1428.4,778.9 1431.4,777.5 1434.5,777.5 C1437.9,777.5 1441.4,783.7 1444.8,783.7 C1446.2,783.7 1447.5,780.7 1448.9,780.6 C1455.4,780.3 1461.9,780.5 1468.4,780.2 C1470.5,780.1 1472.5,778.1 1474.6,778.1 C1476.0,778.1 1477.3,780.2 1478.7,780.2 C1483.5,780.2 1488.3,779.9 1493.1,779.2 C1495.2,778.9 1497.2,776.1 1499.3,776.1 C1501.0,776.1 1502.7,781.6 1504.4,781.6 C1505.8,781.6 1507.1,778.8 1508.5,778.8 C1510.2,778.8 1512.0,781.6 1513.7,781.6 C1515.4,781.6 1517.1,778.8 1518.8,778.8 C1520.5,778.8 1522.2,782.2 1523.9,782.2 C1525.6,782.2 1527.4,781.2 1529.1,779.2 C1530.6,777.5 1532.1,766.8 1533.6,766.8 C1534.8,766.8 1536.1,780.2 1537.3,780.2 C1539.0,780.2 1540.7,778.4 1542.4,778.1 C1544.5,777.7 1546.5,777.5 1548.6,777.5 C1550.0,777.5 1551.3,782.2 1552.7,782.2 C1554.6,782.2 1556.4,776.1 1558.3,776.1 C1559.9,776.1 1561.4,785.3 1563.0,785.3 C1565.4,785.3 1567.8,783.7 1570.2,782.2 C1572.9,780.5 1575.7,775.1 1578.4,775.1 C1579.8,775.1 1581.1,780.6 1582.5,780.6 C1584.9,780.6 1587.3,780.6 1589.7,780.6 C1591.8,780.6 1593.8,779.3 1595.9,778.8 C1598.0,778.3 1600.0,777.5 1602.1,777.5 C1603.8,777.5 1605.5,780.6 1607.2,780.6 C1608.9,780.6 1610.6,776.7 1612.3,776.7 C1614.0,776.7 1615.8,780.6 1617.5,780.6 C1619.2,780.6 1620.9,780.6 1622.6,780.6 C1624.3,780.6 1626.0,776.1 1627.7,776.1 C1629.4,776.1 1631.2,779.6 1632.9,779.6 C1634.3,779.6 1635.6,772.0 1637.0,772.0 C1639.6,772.0 1642.2,774.2 1644.8,776.0 C1647.2,777.6 1649.6,782.0 1652.0,782.0 C1653.8,782.0 1655.6,767.8 1657.4,767.8 C1658.8,767.8 1660.2,778.4 1661.6,778.4 C1666.0,778.4 1670.4,778.1 1674.8,778.1 C1677.2,778.1 1679.6,781.4 1682.0,781.4 C1685.2,781.4 1688.3,778.6 1691.5,778.6 C1693.1,778.6 1694.7,779.6 1696.3,779.6 C1697.9,779.6 1699.5,768.8 1701.1,768.8 C1703.1,768.8 1705.1,771.1 1707.1,773.0 C1708.7,774.5 1710.3,778.4 1711.9,778.4 C1713.5,778.4 1715.1,776.0 1716.7,776.0 C1718.3,776.0 1719.9,780.2 1721.5,780.2 C1723.1,780.2 1724.7,774.8 1726.3,774.8 C1727.9,774.8 1729.5,780.5 1731.1,780.5 C1734.7,780.5 1738.3,778.1 1741.9,778.1 C1744.7,778.1 1747.5,779.0 1750.3,779.0 C1751.9,779.0 1753.5,776.6 1755.1,776.6 C1758.3,776.6 1761.5,779.0 1764.7,779.0 C1766.7,779.0 1768.6,776.6 1770.6,776.6 C1772.2,776.6 1773.8,781.4 1775.4,781.4 C1777.0,781.4 1778.6,777.2 1780.2,776.6 C1782.2,775.8 1784.2,776.2 1786.2,775.4 C1787.6,774.8 1789.0,773.0 1790.4,773.0 C1791.8,773.0 1793.2,777.5 1794.6,778.4 C1798.2,780.8 1801.8,782.0 1805.4,782.0 C1807.0,782.0 1808.6,781.4 1810.2,780.2 C1811.8,779.0 1813.4,773.3 1815.0,773.3 C1816.6,773.3 1818.2,781.4 1819.8,781.4 C1821.4,781.4 1823.0,779.6 1824.6,779.6 C1826.6,779.6 1828.6,782.2 1830.6,782.2 C1831.8,782.2 1833.0,780.3 1834.2,780.2 C1839.4,779.8 1844.6,780.0 1849.8,779.6 C1851.6,779.5 1853.4,775.7 1855.2,775.7 C1857.0,775.7 1858.7,778.4 1860.5,779.6 C1861.7,780.4 1862.9,781.2 1864.1,782.0" fill="none" stroke="#4ba3cc" stroke-width="2" stroke-linejoin="round" stroke-linecap="round"/>
<line x1="1480" y1="870.5" x2="1492" y2="870.5" stroke="#4ba3cc" stroke-width="2" stroke-linecap="round"/>
<text x="1500" y="874.5" font-size="11" fill="#616161">Sep 17–Dec 15, 2024</text>
<line x1="1626" y1="870.5" x2="1638" y2="870.5" stroke="#9ccbe0" stroke-width="2" stroke-dasharray="0.01 4" stroke-linecap="round"/>
<text x="1646" y="874.5" font-size="11" fill="#616161">Jun 19–Sep 16, 2024</text>
</svg>
</div>
<div class="card" style="left:264px;top:861px;width:529px;height:353px">
<div class="ctitle sb" style="letter-spacing:0.575px">Top selling products</div>
</div>
<div class="card" style="left:810px;top:861px;width:529px;height:353px">
<div class="ctitle sb" style="letter-spacing:0.524px">Customer cohort analysis</div>
</div>
<div class="card" style="left:1355px;top:861px;width:529px;height:353px">
<div class="ctitle sb" style="letter-spacing:0.483px">Returning customer rate</div>
</div>
<div class="abs" style="left:1911px;top:11px;width:7px;height:247px;background:#b3b3b3"></div>
<div class="abs" style="left:1912px;top:3px;width:0;height:0;border-left:3px solid transparent;border-right:3px solid transparent;border-bottom:4px solid #a0a0a0"></div>
<div class="abs" style="left:1912px;top:881px;width:0;height:0;border-left:3px solid transparent;border-right:3px solid transparent;border-top:4px solid #9a9a9a"></div>
</div>
<div class="abs" style="left:0;top:943px;width:1919px;height:6px;background:#dde8f3;border-top:1px solid #b9c0c8"></div>
<div class="abs" style="left:1554px;top:841px;width:208px;height:89px;background:#f9f9f9;border-radius:8px;box-shadow:0 2px 6px rgba(0,0,0,.14),0 0 0 1px rgba(0,0,0,.05)"></div>
<div class="abs" style="left:1679px;top:847px;width:37px;height:38px;background:#fdfdfd;border-radius:4px;box-shadow:0 0 0 0.5px rgba(0,0,0,.04)"></div>
<svg class="abs" style="left:1569px;top:857px" width="18" height="18" viewBox="0 0 18 18"><path d="M9 1 C15 1 17 3 17 9 C17 15 15 17 9 17 C3 17 1 15 1 9 C1 3 3 1 9 1 Z" fill="#5aad1f"/><path d="M5.3 9.2 L7.8 11.6 L12.6 6.6" fill="none" stroke="#fff" stroke-width="1.8" stroke-linecap="round" stroke-linejoin="round"/></svg>
<svg class="abs" style="left:1608px;top:856px" width="20" height="20" viewBox="0 0 20 20"><path d="M1.5 6 L7 6 L9 14 L12.5 7 L8 18 Z" fill="#6e6e78"/><path d="M1.5 6 L9 6 L8 18 Z" fill="#55555e"/><circle cx="14" cy="6" r="4.6" fill="#d8344a"/><path d="M12.3 4.3 L15.7 7.7 M15.7 4.3 L12.3 7.7" stroke="#fff" stroke-width="1.3"/></svg>
<svg class="abs" style="left:1649px;top:858px" width="18" height="18" viewBox="0 0 18 18"><path d="M6.8 2.6 L6.8 15.4 M11.2 2.6 L11.2 15.4 M2.6 6.8 L15.4 6.8 M2.6 11.2 L15.4 11.2" stroke="#666" stroke-width="4.2" stroke-linecap="round" fill="none"/><path d="M6.8 2.6 L6.8 15.4 M11.2 2.6 L11.2 15.4 M2.6 6.8 L15.4 6.8 M2.6 11.2 L15.4 11.2" stroke="#f9f9f9" stroke-width="2.3" stroke-linecap="round" fill="none"/></svg>
<svg class="abs" style="left:1688px;top:856px" width="20" height="20" viewBox="0 0 20 20"><defs><linearGradient id="fth" x1="0" y1="1" x2="1" y2="0"><stop offset="0" stop-color="#8a5cc9"/><stop offset="1" stop-color="#c9a3ef"/></linearGradient></defs><path d="M2.5 17.5 C3.5 11 9 4.5 17.2 1.2 C17 8.5 11.5 15 2.5 17.5 Z" fill="url(#fth)"/><path d="M2.5 17.5 C7 12.5 11 8.5 16 3" stroke="#7a4db5" stroke-width="0.7" fill="none"/></svg>
<svg class="abs" style="left:1731px;top:856px" width="14" height="18" viewBox="0 0 14 18"><path d="M0.8 5 C0.8 2 3.5 0.8 7 0.8 C10.5 0.8 13.2 2 13.2 5 L11.5 6 L11.3 17.2 L2.7 17.2 L2.5 6 Z" fill="#2b2b2b"/><path d="M5 8.5 L5 15 M9 8.5 L9 15 M5 11.8 L9 11.8" stroke="#ddd" stroke-width="1"/><path d="M2.5 4.2 C4.5 3 9.5 3 11.5 4.2" stroke="#888" stroke-width="0.8" fill="none"/></svg>
<svg class="abs" style="left:1569px;top:897px" width="18" height="18" viewBox="0 0 18 18"><path d="M8 1 L14.5 3.2 L14.5 9 C14.5 12.5 11.5 15 8 16.5 C4.5 15 1.5 12.5 1.5 9 L1.5 3.2 Z" fill="#1d8fd6"/><path d="M8 1 L14.5 3.2 L14.5 9 L8 9 Z" fill="#3cb0ee"/><path d="M1.5 9 L8 9 L8 16.5 C4.5 15 1.5 12.5 1.5 9 Z" fill="#0f6fb5"/><path d="M12.5 9.5 L17.5 17.5 L7.5 17.5 Z" fill="#f7c531" stroke="#f7c531" stroke-width="0.6" stroke-linejoin="round"/><path d="M12.5 11.8 L12.5 14.8" stroke="#333" stroke-width="1.1"/><circle cx="12.5" cy="16.2" r="0.6" fill="#333"/></svg>
</body></html>
